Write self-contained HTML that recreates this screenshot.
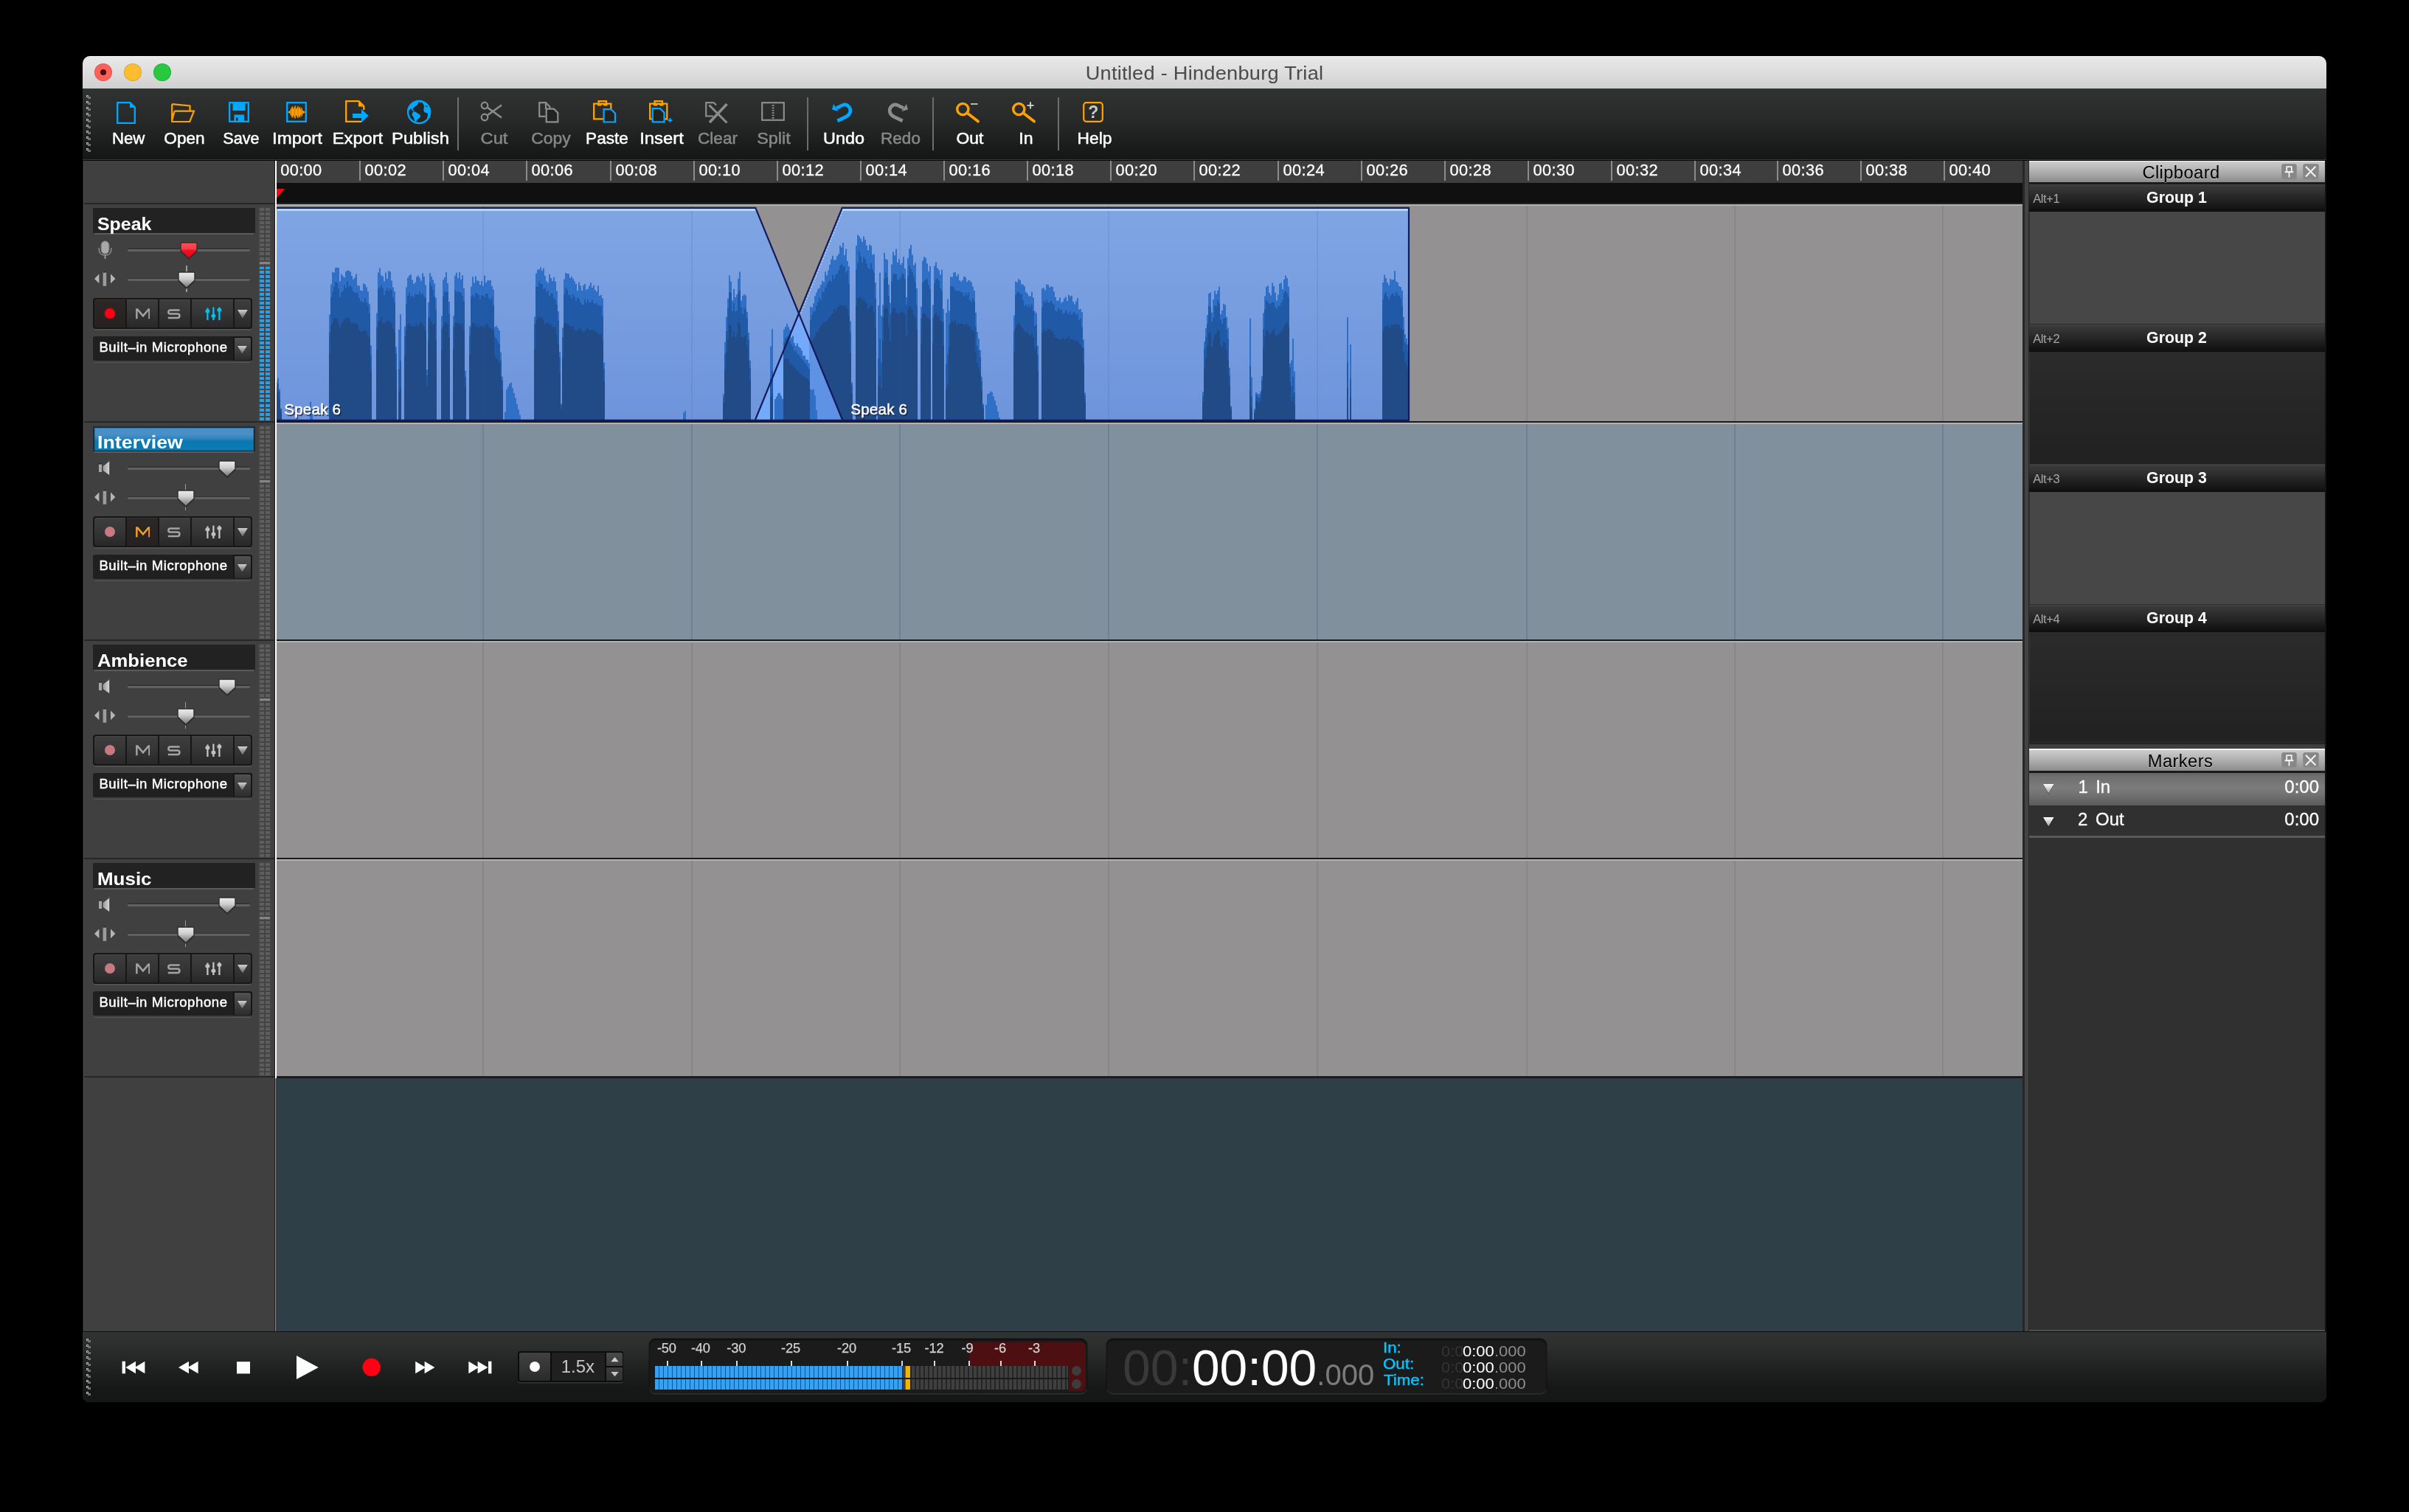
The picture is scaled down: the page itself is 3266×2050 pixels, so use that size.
<!DOCTYPE html>
<html><head><meta charset="utf-8"><title>Untitled - Hindenburg Trial</title>
<style>
html,body{margin:0;padding:0;background:#000;}
body{width:3266px;height:2050px;overflow:hidden;position:relative;font-family:"Liberation Sans",sans-serif;}
.a{position:absolute;display:block;}
.t{position:absolute;white-space:nowrap;font-family:"Liberation Sans",sans-serif;-webkit-text-stroke:0.02px currentColor;}
#win{position:absolute;left:112px;top:76px;width:3042px;height:1825px;overflow:hidden;border-radius:10px 10px 9px 9px;background:#3f3f3f;}
#in{position:absolute;left:-112px;top:-76px;width:3266px;height:2050px;opacity:0.9999;transform:rotate(0.0001deg);}
</style></head>
<body>
<div id="win"><div id="in">
<div class="a" style="left:112px;top:218px;width:261px;height:1587px;background:#3f3f3f;"></div>
<div class="a" style="left:112px;top:218px;width:1.4px;height:1587px;background:#151515;"></div>
<div class="a" style="left:113.4px;top:218px;width:1px;height:1587px;background:#4a4a4a;"></div>
<div class="a" style="left:114px;top:275px;width:258.5px;height:2px;background:#262626;"></div>
<div class="a" style="left:114px;top:571px;width:258.5px;height:2px;background:#262626;"></div>
<div class="a" style="left:114px;top:867px;width:258.5px;height:2px;background:#262626;"></div>
<div class="a" style="left:114px;top:1163px;width:258.5px;height:2px;background:#262626;"></div>
<div class="a" style="left:114px;top:1459px;width:258.5px;height:2px;background:#262626;"></div>
<div class="a" style="left:126px;top:282px;width:220px;height:34px;background:#212121;"></div>
<div class="a" style="left:128px;top:316.4px;width:216px;height:1.4px;background:#5a5a5a;"></div>
<div class="t" style="left:131.60px;top:291.53px;font-size:24.3px;line-height:24.3px;color:#fff;font-weight:700;transform:scaleX(1.025);transform-origin:0 0;">Speak</div>
<svg class="a" style="left:133.3px;top:325.5px;" width="19" height="26" viewBox="0 0 19 26"><rect x="4" y="0.8" width="11" height="17.5" rx="5.5" fill="#a9a9a9" stroke="#6c6c6c" stroke-width="1"/><path d="M1.2 10V12.5C1.2 17.5 5 20 9.5 20C14 20 17.8 17.5 17.8 12.5V10" fill="none" stroke="#8c8c8c" stroke-width="1.5"/><path d="M9.5 20V25" stroke="#9c9c9c" stroke-width="1.8"/></svg>
<div class="a" style="left:173px;top:336.4px;width:166px;height:1.6px;background:#333;border-radius:2px 2px 0 0;"></div><div class="a" style="left:173px;top:338.0px;width:166px;height:2.6px;background:#5f5f5f;border-radius:0 0 2px 2px;"></div>
<svg class="a" style="left:242.6px;top:326.8px;" width="26" height="28" viewBox="0 0 26 28"><defs><linearGradient id="tgk0a" x1="0" y1="0" x2="0" y2="1"><stop offset="0" stop-color="#f85058"/><stop offset="0.42" stop-color="#f63a44"/><stop offset="0.46" stop-color="#f01222"/><stop offset="1" stop-color="#e00010"/></linearGradient></defs><path d="M2 3.2Q2 2 3.2 2H22.8Q24 2 24 3.2V13L13 23.5L2 13Z" fill="rgba(0,0,0,.35)" transform="translate(0,1.6)"/><path d="M2 3.2Q2 2 3.2 2H22.8Q24 2 24 3.2V13L13 23.5L2 13Z" fill="url(#tgk0a)" stroke="#3a2a2a" stroke-width="1.4"/></svg>
<svg class="a" style="left:127.8px;top:368px;" width="28.4" height="19.8" viewBox="0 0 28.4 19.8"><path d="M6.4 3.5V16.3L0 9.9Z" fill="#b4b4b4"/><path d="M22 3.5V16.3L28.4 9.9Z" fill="#b4b4b4"/><rect x="11.6" y="0" width="4.6" height="19.8" fill="#9c9c9c"/><rect x="11.6" y="0" width="4.6" height="1.6" fill="#2a2a2a"/></svg>
<div class="a" style="left:173px;top:376.6px;width:166px;height:1.6px;background:#333;border-radius:2px 2px 0 0;"></div><div class="a" style="left:173px;top:378.20000000000005px;width:166px;height:2.6px;background:#5f5f5f;border-radius:0 0 2px 2px;"></div>
<div class="a" style="left:252.39999999999998px;top:360px;width:1.8px;height:9px;background:#9a9a9a;"></div>
<div class="a" style="left:252.39999999999998px;top:388px;width:1.8px;height:8px;background:#9a9a9a;"></div>
<svg class="a" style="left:240.2px;top:366.6px;" width="26" height="28" viewBox="0 0 26 28"><defs><linearGradient id="tgk0b" x1="0" y1="0" x2="0" y2="1"><stop offset="0" stop-color="#ececec"/><stop offset="0.4" stop-color="#cfcfcf"/><stop offset="1" stop-color="#6e6e6e"/></linearGradient></defs><path d="M2 3.2Q2 2 3.2 2H22.8Q24 2 24 3.2V13L13 23.5L2 13Z" fill="rgba(0,0,0,.35)" transform="translate(0,1.6)"/><path d="M2 3.2Q2 2 3.2 2H22.8Q24 2 24 3.2V13L13 23.5L2 13Z" fill="url(#tgk0b)" stroke="#2c2c2c" stroke-width="1.4"/></svg>
<div class="a" style="left:126.4px;top:404px;width:215.2px;height:41.5px;background:#161616;border-radius:4px;"></div>
<div class="a" style="left:128px;top:446.4px;width:212px;height:1.3px;background:#505050;"></div>
<div class="a" style="left:127.8px;top:405.8px;width:42.4px;height:38.2px;background:linear-gradient(#2a2626 0%,#252121 100%);border-radius:3px 0 0 3px;box-shadow:inset 0 1px 0 rgba(255,255,255,.06);"></div>
<div class="a" style="left:172px;top:405.8px;width:42px;height:38.2px;background:linear-gradient(#3d3d3d 0%,#343434 50%,#272727 100%);box-shadow:inset 0 1px 0 rgba(255,255,255,.06);"></div>
<div class="a" style="left:215.9px;top:405.8px;width:42.1px;height:38.2px;background:linear-gradient(#3d3d3d 0%,#343434 50%,#272727 100%);box-shadow:inset 0 1px 0 rgba(255,255,255,.06);"></div>
<div class="a" style="left:259.7px;top:405.8px;width:56.3px;height:38.2px;background:linear-gradient(#3d3d3d 0%,#343434 50%,#272727 100%);box-shadow:inset 0 1px 0 rgba(255,255,255,.06);"></div>
<div class="a" style="left:317.8px;top:405.8px;width:22.7px;height:38.2px;background:linear-gradient(#3d3d3d 0%,#343434 50%,#272727 100%);border-radius:0 3px 3px 0;box-shadow:inset 0 1px 0 rgba(255,255,255,.06);"></div>
<div class="a" style="left:141.7px;top:417.8px;width:14.6px;height:14.6px;background:#ff0012;border-radius:50%;box-shadow:0 0 6px rgba(255,0,0,.25);"></div>
<svg class="a" style="left:183.5px;top:418.3px;" width="19.8" height="14.6" viewBox="0 0 22 15.5"><path d="M1.5 15.5V1.4H2.6L11 11.2L19.4 1.4H20.5V15.5" fill="none" stroke="#a4a4a4" stroke-width="2.7" stroke-linejoin="miter"/></svg>
<svg class="a" style="left:227px;top:418px;" width="18" height="15.5" viewBox="0 0 18 15.5"><path d="M16.6 2.6H4Q1.4 2.6 1.4 4.9V5.3Q1.4 7.6 4 7.6H13.6Q16.4 7.6 16.4 10V10.6Q16.4 13 13.6 13H0.8" fill="none" stroke="#a4a4a4" stroke-width="2.5"/></svg>
<svg class="a" style="left:277.6px;top:415.7px;" width="23" height="18.5" viewBox="0 0 23 18.5"><rect x="2.25" y="1.5" width="2.3" height="16.5" fill="#00c0f2"/><rect x="0.5" y="3.6" width="5.8" height="4.4" rx="1.5" fill="#00c0f2"/><rect x="10.25" y="0.6" width="2.3" height="17.4" fill="#00c0f2"/><rect x="8.5" y="10" width="5.8" height="4.4" rx="1.5" fill="#00c0f2"/><rect x="18.25" y="0.6" width="2.3" height="17.4" fill="#00c0f2"/><rect x="16.5" y="2" width="5.8" height="4.4" rx="1.5" fill="#00c0f2"/></svg>
<svg class="a" style="left:322.2px;top:419.7px;" width="13.8" height="11.7" viewBox="0 0 13.8 11.7"><defs><linearGradient id="ark0c" x1="0" y1="0" x2="0" y2="1"><stop offset="0" stop-color="#d2d2d2"/><stop offset="1" stop-color="#5c5c5c"/></linearGradient></defs><path d="M0 0H13.8 L6.9 11.7Z" fill="url(#ark0c)"/></svg>
<div class="a" style="left:126.4px;top:456.3px;width:215.2px;height:33.2px;background:#1f1f1f;border-radius:3px;"></div>
<div class="a" style="left:316.2px;top:456.3px;width:25.4px;height:33.2px;background:#151515;border-radius:0 3px 3px 0;"></div>
<div class="a" style="left:317.8px;top:458.0px;width:22.7px;height:30.2px;background:linear-gradient(#505050 0%,#3e3e3e 50%,#2c2c2c 100%);border-radius:0 2px 2px 0;"></div>
<div class="a" style="left:128px;top:490.5px;width:212px;height:1.3px;background:#575757;"></div>
<div class="t" style="left:134.40px;top:462.24px;font-size:18.5px;line-height:18.5px;color:#fff;font-weight:400;letter-spacing:0.62px;-webkit-text-stroke:0.5px #fff;">Built–in Microphone</div>
<svg class="a" style="left:322.4px;top:468.6px;" width="12.8" height="10.6" viewBox="0 0 12.8 10.6"><defs><linearGradient id="ark0d" x1="0" y1="0" x2="0" y2="1"><stop offset="0" stop-color="#d2d2d2"/><stop offset="1" stop-color="#5c5c5c"/></linearGradient></defs><path d="M0 0H12.8 L6.4 10.6Z" fill="url(#ark0d)"/></svg>
<div class="a" style="left:350.4px;top:280px;width:17.6px;height:291px;background:#434343;"></div>
<div class="a" style="left:352px;top:282px;width:6.1px;height:4px;background:#5c5c5c;"></div><div class="a" style="left:360px;top:282px;width:6.1px;height:4px;background:#5c5c5c;"></div>
<div class="a" style="left:352px;top:288px;width:6.1px;height:4px;background:#5c5c5c;"></div><div class="a" style="left:360px;top:288px;width:6.1px;height:4px;background:#5c5c5c;"></div>
<div class="a" style="left:352px;top:294px;width:6.1px;height:4px;background:#5c5c5c;"></div><div class="a" style="left:360px;top:294px;width:6.1px;height:4px;background:#5c5c5c;"></div>
<div class="a" style="left:352px;top:300px;width:6.1px;height:4px;background:#5c5c5c;"></div><div class="a" style="left:360px;top:300px;width:6.1px;height:4px;background:#5c5c5c;"></div>
<div class="a" style="left:352px;top:306px;width:6.1px;height:4px;background:#5c5c5c;"></div><div class="a" style="left:360px;top:306px;width:6.1px;height:4px;background:#5c5c5c;"></div>
<div class="a" style="left:352px;top:312px;width:6.1px;height:4px;background:#5c5c5c;"></div><div class="a" style="left:360px;top:312px;width:6.1px;height:4px;background:#5c5c5c;"></div>
<div class="a" style="left:352px;top:318px;width:6.1px;height:4px;background:#5c5c5c;"></div><div class="a" style="left:360px;top:318px;width:6.1px;height:4px;background:#5c5c5c;"></div>
<div class="a" style="left:352px;top:324px;width:6.1px;height:4px;background:#5c5c5c;"></div><div class="a" style="left:360px;top:324px;width:6.1px;height:4px;background:#5c5c5c;"></div>
<div class="a" style="left:352px;top:330px;width:6.1px;height:4px;background:#5c5c5c;"></div><div class="a" style="left:360px;top:330px;width:6.1px;height:4px;background:#5c5c5c;"></div>
<div class="a" style="left:352px;top:336px;width:6.1px;height:4px;background:#5c5c5c;"></div><div class="a" style="left:360px;top:336px;width:6.1px;height:4px;background:#5c5c5c;"></div>
<div class="a" style="left:352px;top:342px;width:6.1px;height:4px;background:#5c5c5c;"></div><div class="a" style="left:360px;top:342px;width:6.1px;height:4px;background:#5c5c5c;"></div>
<div class="a" style="left:352px;top:349px;width:6.1px;height:4px;background:#5c5c5c;"></div><div class="a" style="left:360px;top:349px;width:6.1px;height:4px;background:#5c5c5c;"></div>
<div class="a" style="left:352px;top:355px;width:6.1px;height:4px;background:#5c5c5c;"></div><div class="a" style="left:360px;top:355px;width:6.1px;height:4px;background:#5c5c5c;"></div>
<div class="a" style="left:352px;top:361px;width:6.1px;height:4px;background:#5c5c5c;"></div><div class="a" style="left:360px;top:361px;width:6.1px;height:4px;background:#5c5c5c;"></div>
<div class="a" style="left:352px;top:362.00px;width:6.1px;height:3.00px;background:#2e9ce6;"></div><div class="a" style="left:360px;top:362.00px;width:6.1px;height:3.00px;background:#2e9ce6;"></div>
<div class="a" style="left:352px;top:367px;width:6.1px;height:4px;background:#2e9ce6;"></div><div class="a" style="left:360px;top:367px;width:6.1px;height:4px;background:#2e9ce6;"></div>
<div class="a" style="left:352px;top:373px;width:6.1px;height:4px;background:#2e9ce6;"></div><div class="a" style="left:360px;top:373px;width:6.1px;height:4px;background:#2e9ce6;"></div>
<div class="a" style="left:352px;top:379px;width:6.1px;height:4px;background:#2e9ce6;"></div><div class="a" style="left:360px;top:379px;width:6.1px;height:4px;background:#2e9ce6;"></div>
<div class="a" style="left:352px;top:385px;width:6.1px;height:4px;background:#2e9ce6;"></div><div class="a" style="left:360px;top:385px;width:6.1px;height:4px;background:#2e9ce6;"></div>
<div class="a" style="left:352px;top:391px;width:6.1px;height:4px;background:#2e9ce6;"></div><div class="a" style="left:360px;top:391px;width:6.1px;height:4px;background:#2e9ce6;"></div>
<div class="a" style="left:352px;top:397px;width:6.1px;height:4px;background:#2e9ce6;"></div><div class="a" style="left:360px;top:397px;width:6.1px;height:4px;background:#2e9ce6;"></div>
<div class="a" style="left:352px;top:403px;width:6.1px;height:4px;background:#2e9ce6;"></div><div class="a" style="left:360px;top:403px;width:6.1px;height:4px;background:#2e9ce6;"></div>
<div class="a" style="left:352px;top:409px;width:6.1px;height:4px;background:#2e9ce6;"></div><div class="a" style="left:360px;top:409px;width:6.1px;height:4px;background:#2e9ce6;"></div>
<div class="a" style="left:352px;top:415px;width:6.1px;height:4px;background:#2e9ce6;"></div><div class="a" style="left:360px;top:415px;width:6.1px;height:4px;background:#2e9ce6;"></div>
<div class="a" style="left:352px;top:421px;width:6.1px;height:4px;background:#2e9ce6;"></div><div class="a" style="left:360px;top:421px;width:6.1px;height:4px;background:#2e9ce6;"></div>
<div class="a" style="left:352px;top:427px;width:6.1px;height:4px;background:#2e9ce6;"></div><div class="a" style="left:360px;top:427px;width:6.1px;height:4px;background:#2e9ce6;"></div>
<div class="a" style="left:352px;top:433px;width:6.1px;height:4px;background:#2e9ce6;"></div><div class="a" style="left:360px;top:433px;width:6.1px;height:4px;background:#2e9ce6;"></div>
<div class="a" style="left:352px;top:439px;width:6.1px;height:4px;background:#2e9ce6;"></div><div class="a" style="left:360px;top:439px;width:6.1px;height:4px;background:#2e9ce6;"></div>
<div class="a" style="left:352px;top:445px;width:6.1px;height:4px;background:#2e9ce6;"></div><div class="a" style="left:360px;top:445px;width:6.1px;height:4px;background:#2e9ce6;"></div>
<div class="a" style="left:352px;top:451px;width:6.1px;height:4px;background:#2e9ce6;"></div><div class="a" style="left:360px;top:451px;width:6.1px;height:4px;background:#2e9ce6;"></div>
<div class="a" style="left:352px;top:457px;width:6.1px;height:4px;background:#2e9ce6;"></div><div class="a" style="left:360px;top:457px;width:6.1px;height:4px;background:#2e9ce6;"></div>
<div class="a" style="left:352px;top:463px;width:6.1px;height:4px;background:#2e9ce6;"></div><div class="a" style="left:360px;top:463px;width:6.1px;height:4px;background:#2e9ce6;"></div>
<div class="a" style="left:352px;top:469px;width:6.1px;height:4px;background:#2e9ce6;"></div><div class="a" style="left:360px;top:469px;width:6.1px;height:4px;background:#2e9ce6;"></div>
<div class="a" style="left:352px;top:475px;width:6.1px;height:4px;background:#2e9ce6;"></div><div class="a" style="left:360px;top:475px;width:6.1px;height:4px;background:#2e9ce6;"></div>
<div class="a" style="left:352px;top:481px;width:6.1px;height:4px;background:#2e9ce6;"></div><div class="a" style="left:360px;top:481px;width:6.1px;height:4px;background:#2e9ce6;"></div>
<div class="a" style="left:352px;top:487px;width:6.1px;height:4px;background:#2e9ce6;"></div><div class="a" style="left:360px;top:487px;width:6.1px;height:4px;background:#2e9ce6;"></div>
<div class="a" style="left:352px;top:493px;width:6.1px;height:4px;background:#2e9ce6;"></div><div class="a" style="left:360px;top:493px;width:6.1px;height:4px;background:#2e9ce6;"></div>
<div class="a" style="left:352px;top:499px;width:6.1px;height:4px;background:#2e9ce6;"></div><div class="a" style="left:360px;top:499px;width:6.1px;height:4px;background:#2e9ce6;"></div>
<div class="a" style="left:352px;top:505px;width:6.1px;height:4px;background:#2e9ce6;"></div><div class="a" style="left:360px;top:505px;width:6.1px;height:4px;background:#2e9ce6;"></div>
<div class="a" style="left:352px;top:511px;width:6.1px;height:4px;background:#2e9ce6;"></div><div class="a" style="left:360px;top:511px;width:6.1px;height:4px;background:#2e9ce6;"></div>
<div class="a" style="left:352px;top:517px;width:6.1px;height:4px;background:#2e9ce6;"></div><div class="a" style="left:360px;top:517px;width:6.1px;height:4px;background:#2e9ce6;"></div>
<div class="a" style="left:352px;top:523px;width:6.1px;height:4px;background:#2e9ce6;"></div><div class="a" style="left:360px;top:523px;width:6.1px;height:4px;background:#2e9ce6;"></div>
<div class="a" style="left:352px;top:529px;width:6.1px;height:4px;background:#2e9ce6;"></div><div class="a" style="left:360px;top:529px;width:6.1px;height:4px;background:#2e9ce6;"></div>
<div class="a" style="left:352px;top:535px;width:6.1px;height:4px;background:#2e9ce6;"></div><div class="a" style="left:360px;top:535px;width:6.1px;height:4px;background:#2e9ce6;"></div>
<div class="a" style="left:352px;top:541px;width:6.1px;height:4px;background:#2e9ce6;"></div><div class="a" style="left:360px;top:541px;width:6.1px;height:4px;background:#2e9ce6;"></div>
<div class="a" style="left:352px;top:548px;width:6.1px;height:4px;background:#2e9ce6;"></div><div class="a" style="left:360px;top:548px;width:6.1px;height:4px;background:#2e9ce6;"></div>
<div class="a" style="left:352px;top:554px;width:6.1px;height:4px;background:#2e9ce6;"></div><div class="a" style="left:360px;top:554px;width:6.1px;height:4px;background:#2e9ce6;"></div>
<div class="a" style="left:352px;top:560px;width:6.1px;height:4px;background:#2e9ce6;"></div><div class="a" style="left:360px;top:560px;width:6.1px;height:4px;background:#2e9ce6;"></div>
<div class="a" style="left:352px;top:566px;width:6.1px;height:4px;background:#2e9ce6;"></div><div class="a" style="left:360px;top:566px;width:6.1px;height:4px;background:#2e9ce6;"></div>
<div class="a" style="left:352px;top:355.2px;width:14.1px;height:2.6px;background:#858585;"></div>
<div class="a" style="left:126px;top:578px;width:220px;height:34px;background:#1d2a33;"></div>
<div class="a" style="left:127.6px;top:579.6px;width:216.8px;height:31px;background:linear-gradient(#4a8ec6 0%,#4690c8 30%,#2f82bd 48%,#0a78b0 58%,#087ab4 100%);box-shadow:inset 0 0 0 1px rgba(20,60,100,.35);"></div>
<div class="a" style="left:128px;top:612.4px;width:216px;height:1.4px;background:#5a5a5a;"></div>
<div class="t" style="left:131.60px;top:587.53px;font-size:24.3px;line-height:24.3px;color:#fff;font-weight:700;transform:scaleX(1.1);transform-origin:0 0;">Interview</div>
<svg class="a" style="left:133.8px;top:624px;" width="15" height="21" viewBox="0 0 15 21"><defs><linearGradient id="spk1" x1="0" y1="0" x2="1" y2="0"><stop offset="0" stop-color="#9a9a9a"/><stop offset="1" stop-color="#d6d6d6"/></linearGradient></defs><rect x="0" y="5" width="4" height="11" fill="#a8a8a8"/><rect x="0" y="4" width="4" height="1.6" fill="#2a2a2a"/><path d="M5.6 6.5L14.2 0V20L5.6 14Z" fill="url(#spk1)"/><path d="M5.6 6.5L14.2 0V1.6L5.6 8Z" fill="#2e2e2e"/></svg>
<div class="a" style="left:173px;top:632.4px;width:166px;height:1.6px;background:#333;border-radius:2px 2px 0 0;"></div><div class="a" style="left:173px;top:634.0px;width:166px;height:2.6px;background:#5f5f5f;border-radius:0 0 2px 2px;"></div>
<svg class="a" style="left:295px;top:622.8px;" width="26" height="28" viewBox="0 0 26 28"><defs><linearGradient id="tgk1a" x1="0" y1="0" x2="0" y2="1"><stop offset="0" stop-color="#ececec"/><stop offset="0.4" stop-color="#cfcfcf"/><stop offset="1" stop-color="#6e6e6e"/></linearGradient></defs><path d="M2 3.2Q2 2 3.2 2H22.8Q24 2 24 3.2V13L13 23.5L2 13Z" fill="rgba(0,0,0,.35)" transform="translate(0,1.6)"/><path d="M2 3.2Q2 2 3.2 2H22.8Q24 2 24 3.2V13L13 23.5L2 13Z" fill="url(#tgk1a)" stroke="#2c2c2c" stroke-width="1.4"/></svg>
<svg class="a" style="left:127.8px;top:664px;" width="28.4" height="19.8" viewBox="0 0 28.4 19.8"><path d="M6.4 3.5V16.3L0 9.9Z" fill="#b4b4b4"/><path d="M22 3.5V16.3L28.4 9.9Z" fill="#b4b4b4"/><rect x="11.6" y="0" width="4.6" height="19.8" fill="#9c9c9c"/><rect x="11.6" y="0" width="4.6" height="1.6" fill="#2a2a2a"/></svg>
<div class="a" style="left:173px;top:672.6px;width:166px;height:1.6px;background:#333;border-radius:2px 2px 0 0;"></div><div class="a" style="left:173px;top:674.2px;width:166px;height:2.6px;background:#5f5f5f;border-radius:0 0 2px 2px;"></div>
<div class="a" style="left:250.7px;top:656px;width:1.8px;height:9px;background:#9a9a9a;"></div>
<div class="a" style="left:250.7px;top:684px;width:1.8px;height:8px;background:#9a9a9a;"></div>
<svg class="a" style="left:238.5px;top:662.6px;" width="26" height="28" viewBox="0 0 26 28"><defs><linearGradient id="tgk1b" x1="0" y1="0" x2="0" y2="1"><stop offset="0" stop-color="#ececec"/><stop offset="0.4" stop-color="#cfcfcf"/><stop offset="1" stop-color="#6e6e6e"/></linearGradient></defs><path d="M2 3.2Q2 2 3.2 2H22.8Q24 2 24 3.2V13L13 23.5L2 13Z" fill="rgba(0,0,0,.35)" transform="translate(0,1.6)"/><path d="M2 3.2Q2 2 3.2 2H22.8Q24 2 24 3.2V13L13 23.5L2 13Z" fill="url(#tgk1b)" stroke="#2c2c2c" stroke-width="1.4"/></svg>
<div class="a" style="left:126.4px;top:700px;width:215.2px;height:41.5px;background:#161616;border-radius:4px;"></div>
<div class="a" style="left:128px;top:742.4px;width:212px;height:1.3px;background:#505050;"></div>
<div class="a" style="left:127.8px;top:701.8px;width:42.4px;height:38.2px;background:linear-gradient(#3d3d3d 0%,#343434 50%,#272727 100%);border-radius:3px 0 0 3px;box-shadow:inset 0 1px 0 rgba(255,255,255,.06);"></div>
<div class="a" style="left:172px;top:701.8px;width:42px;height:38.2px;background:linear-gradient(#2a2626 0%,#252121 100%);box-shadow:inset 0 1px 0 rgba(255,255,255,.06);"></div>
<div class="a" style="left:215.9px;top:701.8px;width:42.1px;height:38.2px;background:linear-gradient(#3d3d3d 0%,#343434 50%,#272727 100%);box-shadow:inset 0 1px 0 rgba(255,255,255,.06);"></div>
<div class="a" style="left:259.7px;top:701.8px;width:56.3px;height:38.2px;background:linear-gradient(#3d3d3d 0%,#343434 50%,#272727 100%);box-shadow:inset 0 1px 0 rgba(255,255,255,.06);"></div>
<div class="a" style="left:317.8px;top:701.8px;width:22.7px;height:38.2px;background:linear-gradient(#3d3d3d 0%,#343434 50%,#272727 100%);border-radius:0 3px 3px 0;box-shadow:inset 0 1px 0 rgba(255,255,255,.06);"></div>
<div class="a" style="left:141.7px;top:713.8px;width:14.6px;height:14.6px;background:#c67880;border-radius:50%;"></div>
<svg class="a" style="left:183.5px;top:714.3px;" width="19.8" height="14.6" viewBox="0 0 22 15.5"><path d="M1.5 15.5V1.4H2.6L11 11.2L19.4 1.4H20.5V15.5" fill="none" stroke="#f4a21c" stroke-width="2.7" stroke-linejoin="miter"/></svg>
<svg class="a" style="left:227px;top:714px;" width="18" height="15.5" viewBox="0 0 18 15.5"><path d="M16.6 2.6H4Q1.4 2.6 1.4 4.9V5.3Q1.4 7.6 4 7.6H13.6Q16.4 7.6 16.4 10V10.6Q16.4 13 13.6 13H0.8" fill="none" stroke="#a4a4a4" stroke-width="2.5"/></svg>
<svg class="a" style="left:277.6px;top:711.7px;" width="23" height="18.5" viewBox="0 0 23 18.5"><rect x="2.25" y="1.5" width="2.3" height="16.5" fill="#c2c2c2"/><rect x="0.5" y="3.6" width="5.8" height="4.4" rx="1.5" fill="#c2c2c2"/><rect x="10.25" y="0.6" width="2.3" height="17.4" fill="#c2c2c2"/><rect x="8.5" y="10" width="5.8" height="4.4" rx="1.5" fill="#c2c2c2"/><rect x="18.25" y="0.6" width="2.3" height="17.4" fill="#c2c2c2"/><rect x="16.5" y="2" width="5.8" height="4.4" rx="1.5" fill="#c2c2c2"/></svg>
<svg class="a" style="left:322.2px;top:715.7px;" width="13.8" height="11.7" viewBox="0 0 13.8 11.7"><defs><linearGradient id="ark1c" x1="0" y1="0" x2="0" y2="1"><stop offset="0" stop-color="#d2d2d2"/><stop offset="1" stop-color="#5c5c5c"/></linearGradient></defs><path d="M0 0H13.8 L6.9 11.7Z" fill="url(#ark1c)"/></svg>
<div class="a" style="left:126.4px;top:752.3px;width:215.2px;height:33.2px;background:#1f1f1f;border-radius:3px;"></div>
<div class="a" style="left:316.2px;top:752.3px;width:25.4px;height:33.2px;background:#151515;border-radius:0 3px 3px 0;"></div>
<div class="a" style="left:317.8px;top:754.0px;width:22.7px;height:30.2px;background:linear-gradient(#505050 0%,#3e3e3e 50%,#2c2c2c 100%);border-radius:0 2px 2px 0;"></div>
<div class="a" style="left:128px;top:786.5px;width:212px;height:1.3px;background:#575757;"></div>
<div class="t" style="left:134.40px;top:758.24px;font-size:18.5px;line-height:18.5px;color:#fff;font-weight:400;letter-spacing:0.62px;-webkit-text-stroke:0.5px #fff;">Built–in Microphone</div>
<svg class="a" style="left:322.4px;top:764.6px;" width="12.8" height="10.6" viewBox="0 0 12.8 10.6"><defs><linearGradient id="ark1d" x1="0" y1="0" x2="0" y2="1"><stop offset="0" stop-color="#d2d2d2"/><stop offset="1" stop-color="#5c5c5c"/></linearGradient></defs><path d="M0 0H12.8 L6.4 10.6Z" fill="url(#ark1d)"/></svg>
<div class="a" style="left:350.4px;top:576px;width:17.6px;height:291px;background:#434343;"></div>
<div class="a" style="left:352px;top:578px;width:6.1px;height:4px;background:#5c5c5c;"></div><div class="a" style="left:360px;top:578px;width:6.1px;height:4px;background:#5c5c5c;"></div>
<div class="a" style="left:352px;top:584px;width:6.1px;height:4px;background:#5c5c5c;"></div><div class="a" style="left:360px;top:584px;width:6.1px;height:4px;background:#5c5c5c;"></div>
<div class="a" style="left:352px;top:590px;width:6.1px;height:4px;background:#5c5c5c;"></div><div class="a" style="left:360px;top:590px;width:6.1px;height:4px;background:#5c5c5c;"></div>
<div class="a" style="left:352px;top:596px;width:6.1px;height:4px;background:#5c5c5c;"></div><div class="a" style="left:360px;top:596px;width:6.1px;height:4px;background:#5c5c5c;"></div>
<div class="a" style="left:352px;top:602px;width:6.1px;height:4px;background:#5c5c5c;"></div><div class="a" style="left:360px;top:602px;width:6.1px;height:4px;background:#5c5c5c;"></div>
<div class="a" style="left:352px;top:608px;width:6.1px;height:4px;background:#5c5c5c;"></div><div class="a" style="left:360px;top:608px;width:6.1px;height:4px;background:#5c5c5c;"></div>
<div class="a" style="left:352px;top:614px;width:6.1px;height:4px;background:#5c5c5c;"></div><div class="a" style="left:360px;top:614px;width:6.1px;height:4px;background:#5c5c5c;"></div>
<div class="a" style="left:352px;top:620px;width:6.1px;height:4px;background:#5c5c5c;"></div><div class="a" style="left:360px;top:620px;width:6.1px;height:4px;background:#5c5c5c;"></div>
<div class="a" style="left:352px;top:626px;width:6.1px;height:4px;background:#5c5c5c;"></div><div class="a" style="left:360px;top:626px;width:6.1px;height:4px;background:#5c5c5c;"></div>
<div class="a" style="left:352px;top:632px;width:6.1px;height:4px;background:#5c5c5c;"></div><div class="a" style="left:360px;top:632px;width:6.1px;height:4px;background:#5c5c5c;"></div>
<div class="a" style="left:352px;top:638px;width:6.1px;height:4px;background:#5c5c5c;"></div><div class="a" style="left:360px;top:638px;width:6.1px;height:4px;background:#5c5c5c;"></div>
<div class="a" style="left:352px;top:645px;width:6.1px;height:4px;background:#5c5c5c;"></div><div class="a" style="left:360px;top:645px;width:6.1px;height:4px;background:#5c5c5c;"></div>
<div class="a" style="left:352px;top:651px;width:6.1px;height:4px;background:#5c5c5c;"></div><div class="a" style="left:360px;top:651px;width:6.1px;height:4px;background:#5c5c5c;"></div>
<div class="a" style="left:352px;top:657px;width:6.1px;height:4px;background:#5c5c5c;"></div><div class="a" style="left:360px;top:657px;width:6.1px;height:4px;background:#5c5c5c;"></div>
<div class="a" style="left:352px;top:663px;width:6.1px;height:4px;background:#5c5c5c;"></div><div class="a" style="left:360px;top:663px;width:6.1px;height:4px;background:#5c5c5c;"></div>
<div class="a" style="left:352px;top:669px;width:6.1px;height:4px;background:#5c5c5c;"></div><div class="a" style="left:360px;top:669px;width:6.1px;height:4px;background:#5c5c5c;"></div>
<div class="a" style="left:352px;top:675px;width:6.1px;height:4px;background:#5c5c5c;"></div><div class="a" style="left:360px;top:675px;width:6.1px;height:4px;background:#5c5c5c;"></div>
<div class="a" style="left:352px;top:681px;width:6.1px;height:4px;background:#5c5c5c;"></div><div class="a" style="left:360px;top:681px;width:6.1px;height:4px;background:#5c5c5c;"></div>
<div class="a" style="left:352px;top:687px;width:6.1px;height:4px;background:#5c5c5c;"></div><div class="a" style="left:360px;top:687px;width:6.1px;height:4px;background:#5c5c5c;"></div>
<div class="a" style="left:352px;top:693px;width:6.1px;height:4px;background:#5c5c5c;"></div><div class="a" style="left:360px;top:693px;width:6.1px;height:4px;background:#5c5c5c;"></div>
<div class="a" style="left:352px;top:699px;width:6.1px;height:4px;background:#5c5c5c;"></div><div class="a" style="left:360px;top:699px;width:6.1px;height:4px;background:#5c5c5c;"></div>
<div class="a" style="left:352px;top:705px;width:6.1px;height:4px;background:#5c5c5c;"></div><div class="a" style="left:360px;top:705px;width:6.1px;height:4px;background:#5c5c5c;"></div>
<div class="a" style="left:352px;top:711px;width:6.1px;height:4px;background:#5c5c5c;"></div><div class="a" style="left:360px;top:711px;width:6.1px;height:4px;background:#5c5c5c;"></div>
<div class="a" style="left:352px;top:717px;width:6.1px;height:4px;background:#5c5c5c;"></div><div class="a" style="left:360px;top:717px;width:6.1px;height:4px;background:#5c5c5c;"></div>
<div class="a" style="left:352px;top:723px;width:6.1px;height:4px;background:#5c5c5c;"></div><div class="a" style="left:360px;top:723px;width:6.1px;height:4px;background:#5c5c5c;"></div>
<div class="a" style="left:352px;top:729px;width:6.1px;height:4px;background:#5c5c5c;"></div><div class="a" style="left:360px;top:729px;width:6.1px;height:4px;background:#5c5c5c;"></div>
<div class="a" style="left:352px;top:735px;width:6.1px;height:4px;background:#5c5c5c;"></div><div class="a" style="left:360px;top:735px;width:6.1px;height:4px;background:#5c5c5c;"></div>
<div class="a" style="left:352px;top:741px;width:6.1px;height:4px;background:#5c5c5c;"></div><div class="a" style="left:360px;top:741px;width:6.1px;height:4px;background:#5c5c5c;"></div>
<div class="a" style="left:352px;top:747px;width:6.1px;height:4px;background:#5c5c5c;"></div><div class="a" style="left:360px;top:747px;width:6.1px;height:4px;background:#5c5c5c;"></div>
<div class="a" style="left:352px;top:753px;width:6.1px;height:4px;background:#5c5c5c;"></div><div class="a" style="left:360px;top:753px;width:6.1px;height:4px;background:#5c5c5c;"></div>
<div class="a" style="left:352px;top:759px;width:6.1px;height:4px;background:#5c5c5c;"></div><div class="a" style="left:360px;top:759px;width:6.1px;height:4px;background:#5c5c5c;"></div>
<div class="a" style="left:352px;top:765px;width:6.1px;height:4px;background:#5c5c5c;"></div><div class="a" style="left:360px;top:765px;width:6.1px;height:4px;background:#5c5c5c;"></div>
<div class="a" style="left:352px;top:771px;width:6.1px;height:4px;background:#5c5c5c;"></div><div class="a" style="left:360px;top:771px;width:6.1px;height:4px;background:#5c5c5c;"></div>
<div class="a" style="left:352px;top:777px;width:6.1px;height:4px;background:#5c5c5c;"></div><div class="a" style="left:360px;top:777px;width:6.1px;height:4px;background:#5c5c5c;"></div>
<div class="a" style="left:352px;top:783px;width:6.1px;height:4px;background:#5c5c5c;"></div><div class="a" style="left:360px;top:783px;width:6.1px;height:4px;background:#5c5c5c;"></div>
<div class="a" style="left:352px;top:789px;width:6.1px;height:4px;background:#5c5c5c;"></div><div class="a" style="left:360px;top:789px;width:6.1px;height:4px;background:#5c5c5c;"></div>
<div class="a" style="left:352px;top:795px;width:6.1px;height:4px;background:#5c5c5c;"></div><div class="a" style="left:360px;top:795px;width:6.1px;height:4px;background:#5c5c5c;"></div>
<div class="a" style="left:352px;top:801px;width:6.1px;height:4px;background:#5c5c5c;"></div><div class="a" style="left:360px;top:801px;width:6.1px;height:4px;background:#5c5c5c;"></div>
<div class="a" style="left:352px;top:807px;width:6.1px;height:4px;background:#5c5c5c;"></div><div class="a" style="left:360px;top:807px;width:6.1px;height:4px;background:#5c5c5c;"></div>
<div class="a" style="left:352px;top:813px;width:6.1px;height:4px;background:#5c5c5c;"></div><div class="a" style="left:360px;top:813px;width:6.1px;height:4px;background:#5c5c5c;"></div>
<div class="a" style="left:352px;top:819px;width:6.1px;height:4px;background:#5c5c5c;"></div><div class="a" style="left:360px;top:819px;width:6.1px;height:4px;background:#5c5c5c;"></div>
<div class="a" style="left:352px;top:825px;width:6.1px;height:4px;background:#5c5c5c;"></div><div class="a" style="left:360px;top:825px;width:6.1px;height:4px;background:#5c5c5c;"></div>
<div class="a" style="left:352px;top:831px;width:6.1px;height:4px;background:#5c5c5c;"></div><div class="a" style="left:360px;top:831px;width:6.1px;height:4px;background:#5c5c5c;"></div>
<div class="a" style="left:352px;top:837px;width:6.1px;height:4px;background:#5c5c5c;"></div><div class="a" style="left:360px;top:837px;width:6.1px;height:4px;background:#5c5c5c;"></div>
<div class="a" style="left:352px;top:844px;width:6.1px;height:4px;background:#5c5c5c;"></div><div class="a" style="left:360px;top:844px;width:6.1px;height:4px;background:#5c5c5c;"></div>
<div class="a" style="left:352px;top:850px;width:6.1px;height:4px;background:#5c5c5c;"></div><div class="a" style="left:360px;top:850px;width:6.1px;height:4px;background:#5c5c5c;"></div>
<div class="a" style="left:352px;top:856px;width:6.1px;height:4px;background:#5c5c5c;"></div><div class="a" style="left:360px;top:856px;width:6.1px;height:4px;background:#5c5c5c;"></div>
<div class="a" style="left:352px;top:862px;width:6.1px;height:4px;background:#5c5c5c;"></div><div class="a" style="left:360px;top:862px;width:6.1px;height:4px;background:#5c5c5c;"></div>
<div class="a" style="left:352px;top:651.2px;width:14.1px;height:2.6px;background:#858585;"></div>
<div class="a" style="left:126px;top:874px;width:220px;height:34px;background:#212121;"></div>
<div class="a" style="left:128px;top:908.4px;width:216px;height:1.4px;background:#5a5a5a;"></div>
<div class="t" style="left:131.60px;top:883.53px;font-size:24.3px;line-height:24.3px;color:#fff;font-weight:700;transform:scaleX(1.056);transform-origin:0 0;">Ambience</div>
<svg class="a" style="left:133.8px;top:920px;" width="15" height="21" viewBox="0 0 15 21"><defs><linearGradient id="spk2" x1="0" y1="0" x2="1" y2="0"><stop offset="0" stop-color="#9a9a9a"/><stop offset="1" stop-color="#d6d6d6"/></linearGradient></defs><rect x="0" y="5" width="4" height="11" fill="#a8a8a8"/><rect x="0" y="4" width="4" height="1.6" fill="#2a2a2a"/><path d="M5.6 6.5L14.2 0V20L5.6 14Z" fill="url(#spk2)"/><path d="M5.6 6.5L14.2 0V1.6L5.6 8Z" fill="#2e2e2e"/></svg>
<div class="a" style="left:173px;top:928.4px;width:166px;height:1.6px;background:#333;border-radius:2px 2px 0 0;"></div><div class="a" style="left:173px;top:930.0px;width:166px;height:2.6px;background:#5f5f5f;border-radius:0 0 2px 2px;"></div>
<svg class="a" style="left:295px;top:918.8px;" width="26" height="28" viewBox="0 0 26 28"><defs><linearGradient id="tgk2a" x1="0" y1="0" x2="0" y2="1"><stop offset="0" stop-color="#ececec"/><stop offset="0.4" stop-color="#cfcfcf"/><stop offset="1" stop-color="#6e6e6e"/></linearGradient></defs><path d="M2 3.2Q2 2 3.2 2H22.8Q24 2 24 3.2V13L13 23.5L2 13Z" fill="rgba(0,0,0,.35)" transform="translate(0,1.6)"/><path d="M2 3.2Q2 2 3.2 2H22.8Q24 2 24 3.2V13L13 23.5L2 13Z" fill="url(#tgk2a)" stroke="#2c2c2c" stroke-width="1.4"/></svg>
<svg class="a" style="left:127.8px;top:960px;" width="28.4" height="19.8" viewBox="0 0 28.4 19.8"><path d="M6.4 3.5V16.3L0 9.9Z" fill="#b4b4b4"/><path d="M22 3.5V16.3L28.4 9.9Z" fill="#b4b4b4"/><rect x="11.6" y="0" width="4.6" height="19.8" fill="#9c9c9c"/><rect x="11.6" y="0" width="4.6" height="1.6" fill="#2a2a2a"/></svg>
<div class="a" style="left:173px;top:968.6px;width:166px;height:1.6px;background:#333;border-radius:2px 2px 0 0;"></div><div class="a" style="left:173px;top:970.2px;width:166px;height:2.6px;background:#5f5f5f;border-radius:0 0 2px 2px;"></div>
<div class="a" style="left:250.7px;top:952px;width:1.8px;height:9px;background:#9a9a9a;"></div>
<div class="a" style="left:250.7px;top:980px;width:1.8px;height:8px;background:#9a9a9a;"></div>
<svg class="a" style="left:238.5px;top:958.6px;" width="26" height="28" viewBox="0 0 26 28"><defs><linearGradient id="tgk2b" x1="0" y1="0" x2="0" y2="1"><stop offset="0" stop-color="#ececec"/><stop offset="0.4" stop-color="#cfcfcf"/><stop offset="1" stop-color="#6e6e6e"/></linearGradient></defs><path d="M2 3.2Q2 2 3.2 2H22.8Q24 2 24 3.2V13L13 23.5L2 13Z" fill="rgba(0,0,0,.35)" transform="translate(0,1.6)"/><path d="M2 3.2Q2 2 3.2 2H22.8Q24 2 24 3.2V13L13 23.5L2 13Z" fill="url(#tgk2b)" stroke="#2c2c2c" stroke-width="1.4"/></svg>
<div class="a" style="left:126.4px;top:996px;width:215.2px;height:41.5px;background:#161616;border-radius:4px;"></div>
<div class="a" style="left:128px;top:1038.4px;width:212px;height:1.3px;background:#505050;"></div>
<div class="a" style="left:127.8px;top:997.8px;width:42.4px;height:38.2px;background:linear-gradient(#3d3d3d 0%,#343434 50%,#272727 100%);border-radius:3px 0 0 3px;box-shadow:inset 0 1px 0 rgba(255,255,255,.06);"></div>
<div class="a" style="left:172px;top:997.8px;width:42px;height:38.2px;background:linear-gradient(#3d3d3d 0%,#343434 50%,#272727 100%);box-shadow:inset 0 1px 0 rgba(255,255,255,.06);"></div>
<div class="a" style="left:215.9px;top:997.8px;width:42.1px;height:38.2px;background:linear-gradient(#3d3d3d 0%,#343434 50%,#272727 100%);box-shadow:inset 0 1px 0 rgba(255,255,255,.06);"></div>
<div class="a" style="left:259.7px;top:997.8px;width:56.3px;height:38.2px;background:linear-gradient(#3d3d3d 0%,#343434 50%,#272727 100%);box-shadow:inset 0 1px 0 rgba(255,255,255,.06);"></div>
<div class="a" style="left:317.8px;top:997.8px;width:22.7px;height:38.2px;background:linear-gradient(#3d3d3d 0%,#343434 50%,#272727 100%);border-radius:0 3px 3px 0;box-shadow:inset 0 1px 0 rgba(255,255,255,.06);"></div>
<div class="a" style="left:141.7px;top:1009.8px;width:14.6px;height:14.6px;background:#c67880;border-radius:50%;"></div>
<svg class="a" style="left:183.5px;top:1010.3px;" width="19.8" height="14.6" viewBox="0 0 22 15.5"><path d="M1.5 15.5V1.4H2.6L11 11.2L19.4 1.4H20.5V15.5" fill="none" stroke="#a4a4a4" stroke-width="2.7" stroke-linejoin="miter"/></svg>
<svg class="a" style="left:227px;top:1010px;" width="18" height="15.5" viewBox="0 0 18 15.5"><path d="M16.6 2.6H4Q1.4 2.6 1.4 4.9V5.3Q1.4 7.6 4 7.6H13.6Q16.4 7.6 16.4 10V10.6Q16.4 13 13.6 13H0.8" fill="none" stroke="#a4a4a4" stroke-width="2.5"/></svg>
<svg class="a" style="left:277.6px;top:1007.7px;" width="23" height="18.5" viewBox="0 0 23 18.5"><rect x="2.25" y="1.5" width="2.3" height="16.5" fill="#c2c2c2"/><rect x="0.5" y="3.6" width="5.8" height="4.4" rx="1.5" fill="#c2c2c2"/><rect x="10.25" y="0.6" width="2.3" height="17.4" fill="#c2c2c2"/><rect x="8.5" y="10" width="5.8" height="4.4" rx="1.5" fill="#c2c2c2"/><rect x="18.25" y="0.6" width="2.3" height="17.4" fill="#c2c2c2"/><rect x="16.5" y="2" width="5.8" height="4.4" rx="1.5" fill="#c2c2c2"/></svg>
<svg class="a" style="left:322.2px;top:1011.7px;" width="13.8" height="11.7" viewBox="0 0 13.8 11.7"><defs><linearGradient id="ark2c" x1="0" y1="0" x2="0" y2="1"><stop offset="0" stop-color="#d2d2d2"/><stop offset="1" stop-color="#5c5c5c"/></linearGradient></defs><path d="M0 0H13.8 L6.9 11.7Z" fill="url(#ark2c)"/></svg>
<div class="a" style="left:126.4px;top:1048.3px;width:215.2px;height:33.2px;background:#1f1f1f;border-radius:3px;"></div>
<div class="a" style="left:316.2px;top:1048.3px;width:25.4px;height:33.2px;background:#151515;border-radius:0 3px 3px 0;"></div>
<div class="a" style="left:317.8px;top:1050.0px;width:22.7px;height:30.2px;background:linear-gradient(#505050 0%,#3e3e3e 50%,#2c2c2c 100%);border-radius:0 2px 2px 0;"></div>
<div class="a" style="left:128px;top:1082.5px;width:212px;height:1.3px;background:#575757;"></div>
<div class="t" style="left:134.40px;top:1054.24px;font-size:18.5px;line-height:18.5px;color:#fff;font-weight:400;letter-spacing:0.62px;-webkit-text-stroke:0.5px #fff;">Built–in Microphone</div>
<svg class="a" style="left:322.4px;top:1060.6px;" width="12.8" height="10.6" viewBox="0 0 12.8 10.6"><defs><linearGradient id="ark2d" x1="0" y1="0" x2="0" y2="1"><stop offset="0" stop-color="#d2d2d2"/><stop offset="1" stop-color="#5c5c5c"/></linearGradient></defs><path d="M0 0H12.8 L6.4 10.6Z" fill="url(#ark2d)"/></svg>
<div class="a" style="left:350.4px;top:872px;width:17.6px;height:291px;background:#434343;"></div>
<div class="a" style="left:352px;top:874px;width:6.1px;height:4px;background:#5c5c5c;"></div><div class="a" style="left:360px;top:874px;width:6.1px;height:4px;background:#5c5c5c;"></div>
<div class="a" style="left:352px;top:880px;width:6.1px;height:4px;background:#5c5c5c;"></div><div class="a" style="left:360px;top:880px;width:6.1px;height:4px;background:#5c5c5c;"></div>
<div class="a" style="left:352px;top:886px;width:6.1px;height:4px;background:#5c5c5c;"></div><div class="a" style="left:360px;top:886px;width:6.1px;height:4px;background:#5c5c5c;"></div>
<div class="a" style="left:352px;top:892px;width:6.1px;height:4px;background:#5c5c5c;"></div><div class="a" style="left:360px;top:892px;width:6.1px;height:4px;background:#5c5c5c;"></div>
<div class="a" style="left:352px;top:898px;width:6.1px;height:4px;background:#5c5c5c;"></div><div class="a" style="left:360px;top:898px;width:6.1px;height:4px;background:#5c5c5c;"></div>
<div class="a" style="left:352px;top:904px;width:6.1px;height:4px;background:#5c5c5c;"></div><div class="a" style="left:360px;top:904px;width:6.1px;height:4px;background:#5c5c5c;"></div>
<div class="a" style="left:352px;top:910px;width:6.1px;height:4px;background:#5c5c5c;"></div><div class="a" style="left:360px;top:910px;width:6.1px;height:4px;background:#5c5c5c;"></div>
<div class="a" style="left:352px;top:916px;width:6.1px;height:4px;background:#5c5c5c;"></div><div class="a" style="left:360px;top:916px;width:6.1px;height:4px;background:#5c5c5c;"></div>
<div class="a" style="left:352px;top:922px;width:6.1px;height:4px;background:#5c5c5c;"></div><div class="a" style="left:360px;top:922px;width:6.1px;height:4px;background:#5c5c5c;"></div>
<div class="a" style="left:352px;top:928px;width:6.1px;height:4px;background:#5c5c5c;"></div><div class="a" style="left:360px;top:928px;width:6.1px;height:4px;background:#5c5c5c;"></div>
<div class="a" style="left:352px;top:934px;width:6.1px;height:4px;background:#5c5c5c;"></div><div class="a" style="left:360px;top:934px;width:6.1px;height:4px;background:#5c5c5c;"></div>
<div class="a" style="left:352px;top:941px;width:6.1px;height:4px;background:#5c5c5c;"></div><div class="a" style="left:360px;top:941px;width:6.1px;height:4px;background:#5c5c5c;"></div>
<div class="a" style="left:352px;top:947px;width:6.1px;height:4px;background:#5c5c5c;"></div><div class="a" style="left:360px;top:947px;width:6.1px;height:4px;background:#5c5c5c;"></div>
<div class="a" style="left:352px;top:953px;width:6.1px;height:4px;background:#5c5c5c;"></div><div class="a" style="left:360px;top:953px;width:6.1px;height:4px;background:#5c5c5c;"></div>
<div class="a" style="left:352px;top:959px;width:6.1px;height:4px;background:#5c5c5c;"></div><div class="a" style="left:360px;top:959px;width:6.1px;height:4px;background:#5c5c5c;"></div>
<div class="a" style="left:352px;top:965px;width:6.1px;height:4px;background:#5c5c5c;"></div><div class="a" style="left:360px;top:965px;width:6.1px;height:4px;background:#5c5c5c;"></div>
<div class="a" style="left:352px;top:971px;width:6.1px;height:4px;background:#5c5c5c;"></div><div class="a" style="left:360px;top:971px;width:6.1px;height:4px;background:#5c5c5c;"></div>
<div class="a" style="left:352px;top:977px;width:6.1px;height:4px;background:#5c5c5c;"></div><div class="a" style="left:360px;top:977px;width:6.1px;height:4px;background:#5c5c5c;"></div>
<div class="a" style="left:352px;top:983px;width:6.1px;height:4px;background:#5c5c5c;"></div><div class="a" style="left:360px;top:983px;width:6.1px;height:4px;background:#5c5c5c;"></div>
<div class="a" style="left:352px;top:989px;width:6.1px;height:4px;background:#5c5c5c;"></div><div class="a" style="left:360px;top:989px;width:6.1px;height:4px;background:#5c5c5c;"></div>
<div class="a" style="left:352px;top:995px;width:6.1px;height:4px;background:#5c5c5c;"></div><div class="a" style="left:360px;top:995px;width:6.1px;height:4px;background:#5c5c5c;"></div>
<div class="a" style="left:352px;top:1001px;width:6.1px;height:4px;background:#5c5c5c;"></div><div class="a" style="left:360px;top:1001px;width:6.1px;height:4px;background:#5c5c5c;"></div>
<div class="a" style="left:352px;top:1007px;width:6.1px;height:4px;background:#5c5c5c;"></div><div class="a" style="left:360px;top:1007px;width:6.1px;height:4px;background:#5c5c5c;"></div>
<div class="a" style="left:352px;top:1013px;width:6.1px;height:4px;background:#5c5c5c;"></div><div class="a" style="left:360px;top:1013px;width:6.1px;height:4px;background:#5c5c5c;"></div>
<div class="a" style="left:352px;top:1019px;width:6.1px;height:4px;background:#5c5c5c;"></div><div class="a" style="left:360px;top:1019px;width:6.1px;height:4px;background:#5c5c5c;"></div>
<div class="a" style="left:352px;top:1025px;width:6.1px;height:4px;background:#5c5c5c;"></div><div class="a" style="left:360px;top:1025px;width:6.1px;height:4px;background:#5c5c5c;"></div>
<div class="a" style="left:352px;top:1031px;width:6.1px;height:4px;background:#5c5c5c;"></div><div class="a" style="left:360px;top:1031px;width:6.1px;height:4px;background:#5c5c5c;"></div>
<div class="a" style="left:352px;top:1037px;width:6.1px;height:4px;background:#5c5c5c;"></div><div class="a" style="left:360px;top:1037px;width:6.1px;height:4px;background:#5c5c5c;"></div>
<div class="a" style="left:352px;top:1043px;width:6.1px;height:4px;background:#5c5c5c;"></div><div class="a" style="left:360px;top:1043px;width:6.1px;height:4px;background:#5c5c5c;"></div>
<div class="a" style="left:352px;top:1049px;width:6.1px;height:4px;background:#5c5c5c;"></div><div class="a" style="left:360px;top:1049px;width:6.1px;height:4px;background:#5c5c5c;"></div>
<div class="a" style="left:352px;top:1055px;width:6.1px;height:4px;background:#5c5c5c;"></div><div class="a" style="left:360px;top:1055px;width:6.1px;height:4px;background:#5c5c5c;"></div>
<div class="a" style="left:352px;top:1061px;width:6.1px;height:4px;background:#5c5c5c;"></div><div class="a" style="left:360px;top:1061px;width:6.1px;height:4px;background:#5c5c5c;"></div>
<div class="a" style="left:352px;top:1067px;width:6.1px;height:4px;background:#5c5c5c;"></div><div class="a" style="left:360px;top:1067px;width:6.1px;height:4px;background:#5c5c5c;"></div>
<div class="a" style="left:352px;top:1073px;width:6.1px;height:4px;background:#5c5c5c;"></div><div class="a" style="left:360px;top:1073px;width:6.1px;height:4px;background:#5c5c5c;"></div>
<div class="a" style="left:352px;top:1079px;width:6.1px;height:4px;background:#5c5c5c;"></div><div class="a" style="left:360px;top:1079px;width:6.1px;height:4px;background:#5c5c5c;"></div>
<div class="a" style="left:352px;top:1085px;width:6.1px;height:4px;background:#5c5c5c;"></div><div class="a" style="left:360px;top:1085px;width:6.1px;height:4px;background:#5c5c5c;"></div>
<div class="a" style="left:352px;top:1091px;width:6.1px;height:4px;background:#5c5c5c;"></div><div class="a" style="left:360px;top:1091px;width:6.1px;height:4px;background:#5c5c5c;"></div>
<div class="a" style="left:352px;top:1097px;width:6.1px;height:4px;background:#5c5c5c;"></div><div class="a" style="left:360px;top:1097px;width:6.1px;height:4px;background:#5c5c5c;"></div>
<div class="a" style="left:352px;top:1103px;width:6.1px;height:4px;background:#5c5c5c;"></div><div class="a" style="left:360px;top:1103px;width:6.1px;height:4px;background:#5c5c5c;"></div>
<div class="a" style="left:352px;top:1109px;width:6.1px;height:4px;background:#5c5c5c;"></div><div class="a" style="left:360px;top:1109px;width:6.1px;height:4px;background:#5c5c5c;"></div>
<div class="a" style="left:352px;top:1115px;width:6.1px;height:4px;background:#5c5c5c;"></div><div class="a" style="left:360px;top:1115px;width:6.1px;height:4px;background:#5c5c5c;"></div>
<div class="a" style="left:352px;top:1121px;width:6.1px;height:4px;background:#5c5c5c;"></div><div class="a" style="left:360px;top:1121px;width:6.1px;height:4px;background:#5c5c5c;"></div>
<div class="a" style="left:352px;top:1127px;width:6.1px;height:4px;background:#5c5c5c;"></div><div class="a" style="left:360px;top:1127px;width:6.1px;height:4px;background:#5c5c5c;"></div>
<div class="a" style="left:352px;top:1133px;width:6.1px;height:4px;background:#5c5c5c;"></div><div class="a" style="left:360px;top:1133px;width:6.1px;height:4px;background:#5c5c5c;"></div>
<div class="a" style="left:352px;top:1140px;width:6.1px;height:4px;background:#5c5c5c;"></div><div class="a" style="left:360px;top:1140px;width:6.1px;height:4px;background:#5c5c5c;"></div>
<div class="a" style="left:352px;top:1146px;width:6.1px;height:4px;background:#5c5c5c;"></div><div class="a" style="left:360px;top:1146px;width:6.1px;height:4px;background:#5c5c5c;"></div>
<div class="a" style="left:352px;top:1152px;width:6.1px;height:4px;background:#5c5c5c;"></div><div class="a" style="left:360px;top:1152px;width:6.1px;height:4px;background:#5c5c5c;"></div>
<div class="a" style="left:352px;top:1158px;width:6.1px;height:4px;background:#5c5c5c;"></div><div class="a" style="left:360px;top:1158px;width:6.1px;height:4px;background:#5c5c5c;"></div>
<div class="a" style="left:352px;top:947.2px;width:14.1px;height:2.6px;background:#858585;"></div>
<div class="a" style="left:126px;top:1170px;width:220px;height:34px;background:#212121;"></div>
<div class="a" style="left:128px;top:1204.4px;width:216px;height:1.4px;background:#5a5a5a;"></div>
<div class="t" style="left:131.60px;top:1179.53px;font-size:24.3px;line-height:24.3px;color:#fff;font-weight:700;transform:scaleX(1.068);transform-origin:0 0;">Music</div>
<svg class="a" style="left:133.8px;top:1216px;" width="15" height="21" viewBox="0 0 15 21"><defs><linearGradient id="spk3" x1="0" y1="0" x2="1" y2="0"><stop offset="0" stop-color="#9a9a9a"/><stop offset="1" stop-color="#d6d6d6"/></linearGradient></defs><rect x="0" y="5" width="4" height="11" fill="#a8a8a8"/><rect x="0" y="4" width="4" height="1.6" fill="#2a2a2a"/><path d="M5.6 6.5L14.2 0V20L5.6 14Z" fill="url(#spk3)"/><path d="M5.6 6.5L14.2 0V1.6L5.6 8Z" fill="#2e2e2e"/></svg>
<div class="a" style="left:173px;top:1224.4px;width:166px;height:1.6px;background:#333;border-radius:2px 2px 0 0;"></div><div class="a" style="left:173px;top:1226.0px;width:166px;height:2.6px;background:#5f5f5f;border-radius:0 0 2px 2px;"></div>
<svg class="a" style="left:295px;top:1214.8px;" width="26" height="28" viewBox="0 0 26 28"><defs><linearGradient id="tgk3a" x1="0" y1="0" x2="0" y2="1"><stop offset="0" stop-color="#ececec"/><stop offset="0.4" stop-color="#cfcfcf"/><stop offset="1" stop-color="#6e6e6e"/></linearGradient></defs><path d="M2 3.2Q2 2 3.2 2H22.8Q24 2 24 3.2V13L13 23.5L2 13Z" fill="rgba(0,0,0,.35)" transform="translate(0,1.6)"/><path d="M2 3.2Q2 2 3.2 2H22.8Q24 2 24 3.2V13L13 23.5L2 13Z" fill="url(#tgk3a)" stroke="#2c2c2c" stroke-width="1.4"/></svg>
<svg class="a" style="left:127.8px;top:1256px;" width="28.4" height="19.8" viewBox="0 0 28.4 19.8"><path d="M6.4 3.5V16.3L0 9.9Z" fill="#b4b4b4"/><path d="M22 3.5V16.3L28.4 9.9Z" fill="#b4b4b4"/><rect x="11.6" y="0" width="4.6" height="19.8" fill="#9c9c9c"/><rect x="11.6" y="0" width="4.6" height="1.6" fill="#2a2a2a"/></svg>
<div class="a" style="left:173px;top:1264.6px;width:166px;height:1.6px;background:#333;border-radius:2px 2px 0 0;"></div><div class="a" style="left:173px;top:1266.1999999999998px;width:166px;height:2.6px;background:#5f5f5f;border-radius:0 0 2px 2px;"></div>
<div class="a" style="left:250.7px;top:1248px;width:1.8px;height:9px;background:#9a9a9a;"></div>
<div class="a" style="left:250.7px;top:1276px;width:1.8px;height:8px;background:#9a9a9a;"></div>
<svg class="a" style="left:238.5px;top:1254.6px;" width="26" height="28" viewBox="0 0 26 28"><defs><linearGradient id="tgk3b" x1="0" y1="0" x2="0" y2="1"><stop offset="0" stop-color="#ececec"/><stop offset="0.4" stop-color="#cfcfcf"/><stop offset="1" stop-color="#6e6e6e"/></linearGradient></defs><path d="M2 3.2Q2 2 3.2 2H22.8Q24 2 24 3.2V13L13 23.5L2 13Z" fill="rgba(0,0,0,.35)" transform="translate(0,1.6)"/><path d="M2 3.2Q2 2 3.2 2H22.8Q24 2 24 3.2V13L13 23.5L2 13Z" fill="url(#tgk3b)" stroke="#2c2c2c" stroke-width="1.4"/></svg>
<div class="a" style="left:126.4px;top:1292px;width:215.2px;height:41.5px;background:#161616;border-radius:4px;"></div>
<div class="a" style="left:128px;top:1334.4px;width:212px;height:1.3px;background:#505050;"></div>
<div class="a" style="left:127.8px;top:1293.8px;width:42.4px;height:38.2px;background:linear-gradient(#3d3d3d 0%,#343434 50%,#272727 100%);border-radius:3px 0 0 3px;box-shadow:inset 0 1px 0 rgba(255,255,255,.06);"></div>
<div class="a" style="left:172px;top:1293.8px;width:42px;height:38.2px;background:linear-gradient(#3d3d3d 0%,#343434 50%,#272727 100%);box-shadow:inset 0 1px 0 rgba(255,255,255,.06);"></div>
<div class="a" style="left:215.9px;top:1293.8px;width:42.1px;height:38.2px;background:linear-gradient(#3d3d3d 0%,#343434 50%,#272727 100%);box-shadow:inset 0 1px 0 rgba(255,255,255,.06);"></div>
<div class="a" style="left:259.7px;top:1293.8px;width:56.3px;height:38.2px;background:linear-gradient(#3d3d3d 0%,#343434 50%,#272727 100%);box-shadow:inset 0 1px 0 rgba(255,255,255,.06);"></div>
<div class="a" style="left:317.8px;top:1293.8px;width:22.7px;height:38.2px;background:linear-gradient(#3d3d3d 0%,#343434 50%,#272727 100%);border-radius:0 3px 3px 0;box-shadow:inset 0 1px 0 rgba(255,255,255,.06);"></div>
<div class="a" style="left:141.7px;top:1305.8px;width:14.6px;height:14.6px;background:#c67880;border-radius:50%;"></div>
<svg class="a" style="left:183.5px;top:1306.3px;" width="19.8" height="14.6" viewBox="0 0 22 15.5"><path d="M1.5 15.5V1.4H2.6L11 11.2L19.4 1.4H20.5V15.5" fill="none" stroke="#a4a4a4" stroke-width="2.7" stroke-linejoin="miter"/></svg>
<svg class="a" style="left:227px;top:1306px;" width="18" height="15.5" viewBox="0 0 18 15.5"><path d="M16.6 2.6H4Q1.4 2.6 1.4 4.9V5.3Q1.4 7.6 4 7.6H13.6Q16.4 7.6 16.4 10V10.6Q16.4 13 13.6 13H0.8" fill="none" stroke="#a4a4a4" stroke-width="2.5"/></svg>
<svg class="a" style="left:277.6px;top:1303.7px;" width="23" height="18.5" viewBox="0 0 23 18.5"><rect x="2.25" y="1.5" width="2.3" height="16.5" fill="#c2c2c2"/><rect x="0.5" y="3.6" width="5.8" height="4.4" rx="1.5" fill="#c2c2c2"/><rect x="10.25" y="0.6" width="2.3" height="17.4" fill="#c2c2c2"/><rect x="8.5" y="10" width="5.8" height="4.4" rx="1.5" fill="#c2c2c2"/><rect x="18.25" y="0.6" width="2.3" height="17.4" fill="#c2c2c2"/><rect x="16.5" y="2" width="5.8" height="4.4" rx="1.5" fill="#c2c2c2"/></svg>
<svg class="a" style="left:322.2px;top:1307.7px;" width="13.8" height="11.7" viewBox="0 0 13.8 11.7"><defs><linearGradient id="ark3c" x1="0" y1="0" x2="0" y2="1"><stop offset="0" stop-color="#d2d2d2"/><stop offset="1" stop-color="#5c5c5c"/></linearGradient></defs><path d="M0 0H13.8 L6.9 11.7Z" fill="url(#ark3c)"/></svg>
<div class="a" style="left:126.4px;top:1344.3px;width:215.2px;height:33.2px;background:#1f1f1f;border-radius:3px;"></div>
<div class="a" style="left:316.2px;top:1344.3px;width:25.4px;height:33.2px;background:#151515;border-radius:0 3px 3px 0;"></div>
<div class="a" style="left:317.8px;top:1346.0px;width:22.7px;height:30.2px;background:linear-gradient(#505050 0%,#3e3e3e 50%,#2c2c2c 100%);border-radius:0 2px 2px 0;"></div>
<div class="a" style="left:128px;top:1378.5px;width:212px;height:1.3px;background:#575757;"></div>
<div class="t" style="left:134.40px;top:1350.24px;font-size:18.5px;line-height:18.5px;color:#fff;font-weight:400;letter-spacing:0.62px;-webkit-text-stroke:0.5px #fff;">Built–in Microphone</div>
<svg class="a" style="left:322.4px;top:1356.6px;" width="12.8" height="10.6" viewBox="0 0 12.8 10.6"><defs><linearGradient id="ark3d" x1="0" y1="0" x2="0" y2="1"><stop offset="0" stop-color="#d2d2d2"/><stop offset="1" stop-color="#5c5c5c"/></linearGradient></defs><path d="M0 0H12.8 L6.4 10.6Z" fill="url(#ark3d)"/></svg>
<div class="a" style="left:350.4px;top:1168px;width:17.6px;height:291px;background:#434343;"></div>
<div class="a" style="left:352px;top:1170px;width:6.1px;height:4px;background:#5c5c5c;"></div><div class="a" style="left:360px;top:1170px;width:6.1px;height:4px;background:#5c5c5c;"></div>
<div class="a" style="left:352px;top:1176px;width:6.1px;height:4px;background:#5c5c5c;"></div><div class="a" style="left:360px;top:1176px;width:6.1px;height:4px;background:#5c5c5c;"></div>
<div class="a" style="left:352px;top:1182px;width:6.1px;height:4px;background:#5c5c5c;"></div><div class="a" style="left:360px;top:1182px;width:6.1px;height:4px;background:#5c5c5c;"></div>
<div class="a" style="left:352px;top:1188px;width:6.1px;height:4px;background:#5c5c5c;"></div><div class="a" style="left:360px;top:1188px;width:6.1px;height:4px;background:#5c5c5c;"></div>
<div class="a" style="left:352px;top:1194px;width:6.1px;height:4px;background:#5c5c5c;"></div><div class="a" style="left:360px;top:1194px;width:6.1px;height:4px;background:#5c5c5c;"></div>
<div class="a" style="left:352px;top:1200px;width:6.1px;height:4px;background:#5c5c5c;"></div><div class="a" style="left:360px;top:1200px;width:6.1px;height:4px;background:#5c5c5c;"></div>
<div class="a" style="left:352px;top:1206px;width:6.1px;height:4px;background:#5c5c5c;"></div><div class="a" style="left:360px;top:1206px;width:6.1px;height:4px;background:#5c5c5c;"></div>
<div class="a" style="left:352px;top:1212px;width:6.1px;height:4px;background:#5c5c5c;"></div><div class="a" style="left:360px;top:1212px;width:6.1px;height:4px;background:#5c5c5c;"></div>
<div class="a" style="left:352px;top:1218px;width:6.1px;height:4px;background:#5c5c5c;"></div><div class="a" style="left:360px;top:1218px;width:6.1px;height:4px;background:#5c5c5c;"></div>
<div class="a" style="left:352px;top:1224px;width:6.1px;height:4px;background:#5c5c5c;"></div><div class="a" style="left:360px;top:1224px;width:6.1px;height:4px;background:#5c5c5c;"></div>
<div class="a" style="left:352px;top:1230px;width:6.1px;height:4px;background:#5c5c5c;"></div><div class="a" style="left:360px;top:1230px;width:6.1px;height:4px;background:#5c5c5c;"></div>
<div class="a" style="left:352px;top:1237px;width:6.1px;height:4px;background:#5c5c5c;"></div><div class="a" style="left:360px;top:1237px;width:6.1px;height:4px;background:#5c5c5c;"></div>
<div class="a" style="left:352px;top:1243px;width:6.1px;height:4px;background:#5c5c5c;"></div><div class="a" style="left:360px;top:1243px;width:6.1px;height:4px;background:#5c5c5c;"></div>
<div class="a" style="left:352px;top:1249px;width:6.1px;height:4px;background:#5c5c5c;"></div><div class="a" style="left:360px;top:1249px;width:6.1px;height:4px;background:#5c5c5c;"></div>
<div class="a" style="left:352px;top:1255px;width:6.1px;height:4px;background:#5c5c5c;"></div><div class="a" style="left:360px;top:1255px;width:6.1px;height:4px;background:#5c5c5c;"></div>
<div class="a" style="left:352px;top:1261px;width:6.1px;height:4px;background:#5c5c5c;"></div><div class="a" style="left:360px;top:1261px;width:6.1px;height:4px;background:#5c5c5c;"></div>
<div class="a" style="left:352px;top:1267px;width:6.1px;height:4px;background:#5c5c5c;"></div><div class="a" style="left:360px;top:1267px;width:6.1px;height:4px;background:#5c5c5c;"></div>
<div class="a" style="left:352px;top:1273px;width:6.1px;height:4px;background:#5c5c5c;"></div><div class="a" style="left:360px;top:1273px;width:6.1px;height:4px;background:#5c5c5c;"></div>
<div class="a" style="left:352px;top:1279px;width:6.1px;height:4px;background:#5c5c5c;"></div><div class="a" style="left:360px;top:1279px;width:6.1px;height:4px;background:#5c5c5c;"></div>
<div class="a" style="left:352px;top:1285px;width:6.1px;height:4px;background:#5c5c5c;"></div><div class="a" style="left:360px;top:1285px;width:6.1px;height:4px;background:#5c5c5c;"></div>
<div class="a" style="left:352px;top:1291px;width:6.1px;height:4px;background:#5c5c5c;"></div><div class="a" style="left:360px;top:1291px;width:6.1px;height:4px;background:#5c5c5c;"></div>
<div class="a" style="left:352px;top:1297px;width:6.1px;height:4px;background:#5c5c5c;"></div><div class="a" style="left:360px;top:1297px;width:6.1px;height:4px;background:#5c5c5c;"></div>
<div class="a" style="left:352px;top:1303px;width:6.1px;height:4px;background:#5c5c5c;"></div><div class="a" style="left:360px;top:1303px;width:6.1px;height:4px;background:#5c5c5c;"></div>
<div class="a" style="left:352px;top:1309px;width:6.1px;height:4px;background:#5c5c5c;"></div><div class="a" style="left:360px;top:1309px;width:6.1px;height:4px;background:#5c5c5c;"></div>
<div class="a" style="left:352px;top:1315px;width:6.1px;height:4px;background:#5c5c5c;"></div><div class="a" style="left:360px;top:1315px;width:6.1px;height:4px;background:#5c5c5c;"></div>
<div class="a" style="left:352px;top:1321px;width:6.1px;height:4px;background:#5c5c5c;"></div><div class="a" style="left:360px;top:1321px;width:6.1px;height:4px;background:#5c5c5c;"></div>
<div class="a" style="left:352px;top:1327px;width:6.1px;height:4px;background:#5c5c5c;"></div><div class="a" style="left:360px;top:1327px;width:6.1px;height:4px;background:#5c5c5c;"></div>
<div class="a" style="left:352px;top:1333px;width:6.1px;height:4px;background:#5c5c5c;"></div><div class="a" style="left:360px;top:1333px;width:6.1px;height:4px;background:#5c5c5c;"></div>
<div class="a" style="left:352px;top:1339px;width:6.1px;height:4px;background:#5c5c5c;"></div><div class="a" style="left:360px;top:1339px;width:6.1px;height:4px;background:#5c5c5c;"></div>
<div class="a" style="left:352px;top:1345px;width:6.1px;height:4px;background:#5c5c5c;"></div><div class="a" style="left:360px;top:1345px;width:6.1px;height:4px;background:#5c5c5c;"></div>
<div class="a" style="left:352px;top:1351px;width:6.1px;height:4px;background:#5c5c5c;"></div><div class="a" style="left:360px;top:1351px;width:6.1px;height:4px;background:#5c5c5c;"></div>
<div class="a" style="left:352px;top:1357px;width:6.1px;height:4px;background:#5c5c5c;"></div><div class="a" style="left:360px;top:1357px;width:6.1px;height:4px;background:#5c5c5c;"></div>
<div class="a" style="left:352px;top:1363px;width:6.1px;height:4px;background:#5c5c5c;"></div><div class="a" style="left:360px;top:1363px;width:6.1px;height:4px;background:#5c5c5c;"></div>
<div class="a" style="left:352px;top:1369px;width:6.1px;height:4px;background:#5c5c5c;"></div><div class="a" style="left:360px;top:1369px;width:6.1px;height:4px;background:#5c5c5c;"></div>
<div class="a" style="left:352px;top:1375px;width:6.1px;height:4px;background:#5c5c5c;"></div><div class="a" style="left:360px;top:1375px;width:6.1px;height:4px;background:#5c5c5c;"></div>
<div class="a" style="left:352px;top:1381px;width:6.1px;height:4px;background:#5c5c5c;"></div><div class="a" style="left:360px;top:1381px;width:6.1px;height:4px;background:#5c5c5c;"></div>
<div class="a" style="left:352px;top:1387px;width:6.1px;height:4px;background:#5c5c5c;"></div><div class="a" style="left:360px;top:1387px;width:6.1px;height:4px;background:#5c5c5c;"></div>
<div class="a" style="left:352px;top:1393px;width:6.1px;height:4px;background:#5c5c5c;"></div><div class="a" style="left:360px;top:1393px;width:6.1px;height:4px;background:#5c5c5c;"></div>
<div class="a" style="left:352px;top:1399px;width:6.1px;height:4px;background:#5c5c5c;"></div><div class="a" style="left:360px;top:1399px;width:6.1px;height:4px;background:#5c5c5c;"></div>
<div class="a" style="left:352px;top:1405px;width:6.1px;height:4px;background:#5c5c5c;"></div><div class="a" style="left:360px;top:1405px;width:6.1px;height:4px;background:#5c5c5c;"></div>
<div class="a" style="left:352px;top:1411px;width:6.1px;height:4px;background:#5c5c5c;"></div><div class="a" style="left:360px;top:1411px;width:6.1px;height:4px;background:#5c5c5c;"></div>
<div class="a" style="left:352px;top:1417px;width:6.1px;height:4px;background:#5c5c5c;"></div><div class="a" style="left:360px;top:1417px;width:6.1px;height:4px;background:#5c5c5c;"></div>
<div class="a" style="left:352px;top:1423px;width:6.1px;height:4px;background:#5c5c5c;"></div><div class="a" style="left:360px;top:1423px;width:6.1px;height:4px;background:#5c5c5c;"></div>
<div class="a" style="left:352px;top:1429px;width:6.1px;height:4px;background:#5c5c5c;"></div><div class="a" style="left:360px;top:1429px;width:6.1px;height:4px;background:#5c5c5c;"></div>
<div class="a" style="left:352px;top:1436px;width:6.1px;height:4px;background:#5c5c5c;"></div><div class="a" style="left:360px;top:1436px;width:6.1px;height:4px;background:#5c5c5c;"></div>
<div class="a" style="left:352px;top:1442px;width:6.1px;height:4px;background:#5c5c5c;"></div><div class="a" style="left:360px;top:1442px;width:6.1px;height:4px;background:#5c5c5c;"></div>
<div class="a" style="left:352px;top:1448px;width:6.1px;height:4px;background:#5c5c5c;"></div><div class="a" style="left:360px;top:1448px;width:6.1px;height:4px;background:#5c5c5c;"></div>
<div class="a" style="left:352px;top:1454px;width:6.1px;height:4px;background:#5c5c5c;"></div><div class="a" style="left:360px;top:1454px;width:6.1px;height:4px;background:#5c5c5c;"></div>
<div class="a" style="left:352px;top:1243.2px;width:14.1px;height:2.6px;background:#858585;"></div>
<div class="a" style="left:372.3px;top:218px;width:1px;height:1243px;background:#1c1c1c;"></div>
<div class="a" style="left:373.3px;top:218px;width:2px;height:1243.7px;background:#ffffff;"></div>
<div class="a" style="left:372.3px;top:1461px;width:0.8px;height:344px;background:#1c1c1c;"></div>
<div class="a" style="left:373px;top:1461.7px;width:1.4px;height:343px;background:#00e000;"></div><div class="a" style="left:375px;top:218px;width:2367.4px;height:30px;background:#3d3d3d;"></div>
<div class="a" style="left:375px;top:248px;width:2367.4px;height:27px;background:#0f0f0f;"></div>
<div class="a" style="left:487px;top:218px;width:2px;height:27px;background:#8b8b8b;"></div>
<div class="a" style="left:600px;top:218px;width:2px;height:27px;background:#8b8b8b;"></div>
<div class="a" style="left:713px;top:218px;width:2px;height:27px;background:#8b8b8b;"></div>
<div class="a" style="left:827px;top:218px;width:2px;height:27px;background:#8b8b8b;"></div>
<div class="a" style="left:940px;top:218px;width:2px;height:27px;background:#8b8b8b;"></div>
<div class="a" style="left:1053px;top:218px;width:2px;height:27px;background:#8b8b8b;"></div>
<div class="a" style="left:1166px;top:218px;width:2px;height:27px;background:#8b8b8b;"></div>
<div class="a" style="left:1279px;top:218px;width:2px;height:27px;background:#8b8b8b;"></div>
<div class="a" style="left:1392px;top:218px;width:2px;height:27px;background:#8b8b8b;"></div>
<div class="a" style="left:1505px;top:218px;width:2px;height:27px;background:#8b8b8b;"></div>
<div class="a" style="left:1618px;top:218px;width:2px;height:27px;background:#8b8b8b;"></div>
<div class="a" style="left:1732px;top:218px;width:2px;height:27px;background:#8b8b8b;"></div>
<div class="a" style="left:1845px;top:218px;width:2px;height:27px;background:#8b8b8b;"></div>
<div class="a" style="left:1958px;top:218px;width:2px;height:27px;background:#8b8b8b;"></div>
<div class="a" style="left:2071px;top:218px;width:2px;height:27px;background:#8b8b8b;"></div>
<div class="a" style="left:2184px;top:218px;width:2px;height:27px;background:#8b8b8b;"></div>
<div class="a" style="left:2297px;top:218px;width:2px;height:27px;background:#8b8b8b;"></div>
<div class="a" style="left:2409px;top:218px;width:2px;height:27px;background:#8b8b8b;"></div>
<div class="a" style="left:2522px;top:218px;width:2px;height:27px;background:#8b8b8b;"></div>
<div class="a" style="left:2635px;top:218px;width:2px;height:27px;background:#8b8b8b;"></div>
<div class="t" style="left:380.20px;top:220.25px;font-size:21.8px;line-height:21.8px;color:#fff;font-weight:400;letter-spacing:0.35px;-webkit-text-stroke:0.3px #fff;">00:00</div>
<div class="t" style="left:494.60px;top:220.25px;font-size:21.8px;line-height:21.8px;color:#fff;font-weight:400;letter-spacing:0.35px;-webkit-text-stroke:0.3px #fff;">00:02</div>
<div class="t" style="left:607.60px;top:220.25px;font-size:21.8px;line-height:21.8px;color:#fff;font-weight:400;letter-spacing:0.35px;-webkit-text-stroke:0.3px #fff;">00:04</div>
<div class="t" style="left:720.60px;top:220.25px;font-size:21.8px;line-height:21.8px;color:#fff;font-weight:400;letter-spacing:0.35px;-webkit-text-stroke:0.3px #fff;">00:06</div>
<div class="t" style="left:834.60px;top:220.25px;font-size:21.8px;line-height:21.8px;color:#fff;font-weight:400;letter-spacing:0.35px;-webkit-text-stroke:0.3px #fff;">00:08</div>
<div class="t" style="left:947.60px;top:220.25px;font-size:21.8px;line-height:21.8px;color:#fff;font-weight:400;letter-spacing:0.35px;-webkit-text-stroke:0.3px #fff;">00:10</div>
<div class="t" style="left:1060.60px;top:220.25px;font-size:21.8px;line-height:21.8px;color:#fff;font-weight:400;letter-spacing:0.35px;-webkit-text-stroke:0.3px #fff;">00:12</div>
<div class="t" style="left:1173.60px;top:220.25px;font-size:21.8px;line-height:21.8px;color:#fff;font-weight:400;letter-spacing:0.35px;-webkit-text-stroke:0.3px #fff;">00:14</div>
<div class="t" style="left:1286.60px;top:220.25px;font-size:21.8px;line-height:21.8px;color:#fff;font-weight:400;letter-spacing:0.35px;-webkit-text-stroke:0.3px #fff;">00:16</div>
<div class="t" style="left:1399.60px;top:220.25px;font-size:21.8px;line-height:21.8px;color:#fff;font-weight:400;letter-spacing:0.35px;-webkit-text-stroke:0.3px #fff;">00:18</div>
<div class="t" style="left:1512.60px;top:220.25px;font-size:21.8px;line-height:21.8px;color:#fff;font-weight:400;letter-spacing:0.35px;-webkit-text-stroke:0.3px #fff;">00:20</div>
<div class="t" style="left:1625.60px;top:220.25px;font-size:21.8px;line-height:21.8px;color:#fff;font-weight:400;letter-spacing:0.35px;-webkit-text-stroke:0.3px #fff;">00:22</div>
<div class="t" style="left:1739.60px;top:220.25px;font-size:21.8px;line-height:21.8px;color:#fff;font-weight:400;letter-spacing:0.35px;-webkit-text-stroke:0.3px #fff;">00:24</div>
<div class="t" style="left:1852.60px;top:220.25px;font-size:21.8px;line-height:21.8px;color:#fff;font-weight:400;letter-spacing:0.35px;-webkit-text-stroke:0.3px #fff;">00:26</div>
<div class="t" style="left:1965.60px;top:220.25px;font-size:21.8px;line-height:21.8px;color:#fff;font-weight:400;letter-spacing:0.35px;-webkit-text-stroke:0.3px #fff;">00:28</div>
<div class="t" style="left:2078.60px;top:220.25px;font-size:21.8px;line-height:21.8px;color:#fff;font-weight:400;letter-spacing:0.35px;-webkit-text-stroke:0.3px #fff;">00:30</div>
<div class="t" style="left:2191.60px;top:220.25px;font-size:21.8px;line-height:21.8px;color:#fff;font-weight:400;letter-spacing:0.35px;-webkit-text-stroke:0.3px #fff;">00:32</div>
<div class="t" style="left:2304.60px;top:220.25px;font-size:21.8px;line-height:21.8px;color:#fff;font-weight:400;letter-spacing:0.35px;-webkit-text-stroke:0.3px #fff;">00:34</div>
<div class="t" style="left:2416.60px;top:220.25px;font-size:21.8px;line-height:21.8px;color:#fff;font-weight:400;letter-spacing:0.35px;-webkit-text-stroke:0.3px #fff;">00:36</div>
<div class="t" style="left:2529.60px;top:220.25px;font-size:21.8px;line-height:21.8px;color:#fff;font-weight:400;letter-spacing:0.35px;-webkit-text-stroke:0.3px #fff;">00:38</div>
<div class="t" style="left:2642.60px;top:220.25px;font-size:21.8px;line-height:21.8px;color:#fff;font-weight:400;letter-spacing:0.35px;-webkit-text-stroke:0.3px #fff;">00:40</div>
<svg class="a" style="left:375px;top:256px;" width="12" height="13" viewBox="0 0 12 13"><path d="M0 0H11L0 12.5Z" fill="#ff0018"/></svg>
<div class="a" style="left:375px;top:275px;width:2367.4px;height:2px;background:#212121;"></div>
<div class="a" style="left:375px;top:277px;width:2367.4px;height:2px;background:#b2b2b2;"></div>
<div class="a" style="left:375px;top:279px;width:2367.4px;height:292px;background:#939192;"></div>
<div class="a" style="left:375px;top:571px;width:2367.4px;height:2px;background:#1a1a1a;"></div>
<div class="a" style="left:375px;top:573px;width:2367.4px;height:2px;background:#b2b2b2;"></div>
<div class="a" style="left:375px;top:575px;width:2367.4px;height:292px;background:#7f909c;"></div>
<div class="a" style="left:375px;top:867px;width:2367.4px;height:2px;background:#1a1a1a;"></div>
<div class="a" style="left:375px;top:869px;width:2367.4px;height:2px;background:#b2b2b2;"></div>
<div class="a" style="left:375px;top:871px;width:2367.4px;height:292px;background:#939192;"></div>
<div class="a" style="left:375px;top:1163px;width:2367.4px;height:2px;background:#1a1a1a;"></div>
<div class="a" style="left:375px;top:1165px;width:2367.4px;height:2px;background:#b2b2b2;"></div>
<div class="a" style="left:375px;top:1167px;width:2367.4px;height:292px;background:#939192;"></div>
<div class="a" style="left:375px;top:1459px;width:2367.4px;height:2px;background:#1a1a1a;"></div>
<div class="a" style="left:654px;top:279px;width:2px;height:292px;background:#868686;"></div>
<div class="a" style="left:937px;top:279px;width:2px;height:292px;background:#868686;"></div>
<div class="a" style="left:1219px;top:279px;width:2px;height:292px;background:#868686;"></div>
<div class="a" style="left:1502px;top:279px;width:2px;height:292px;background:#868686;"></div>
<div class="a" style="left:1785px;top:279px;width:2px;height:292px;background:#868686;"></div>
<div class="a" style="left:2069px;top:279px;width:2px;height:292px;background:#868686;"></div>
<div class="a" style="left:2351px;top:279px;width:2px;height:292px;background:#868686;"></div>
<div class="a" style="left:2633px;top:279px;width:2px;height:292px;background:#868686;"></div>
<div class="a" style="left:654px;top:575px;width:2px;height:292px;background:#6f8090;"></div>
<div class="a" style="left:937px;top:575px;width:2px;height:292px;background:#6f8090;"></div>
<div class="a" style="left:1219px;top:575px;width:2px;height:292px;background:#6f8090;"></div>
<div class="a" style="left:1502px;top:575px;width:2px;height:292px;background:#6f8090;"></div>
<div class="a" style="left:1785px;top:575px;width:2px;height:292px;background:#6f8090;"></div>
<div class="a" style="left:2069px;top:575px;width:2px;height:292px;background:#6f8090;"></div>
<div class="a" style="left:2351px;top:575px;width:2px;height:292px;background:#6f8090;"></div>
<div class="a" style="left:2633px;top:575px;width:2px;height:292px;background:#6f8090;"></div>
<div class="a" style="left:654px;top:871px;width:2px;height:292px;background:#868686;"></div>
<div class="a" style="left:937px;top:871px;width:2px;height:292px;background:#868686;"></div>
<div class="a" style="left:1219px;top:871px;width:2px;height:292px;background:#868686;"></div>
<div class="a" style="left:1502px;top:871px;width:2px;height:292px;background:#868686;"></div>
<div class="a" style="left:1785px;top:871px;width:2px;height:292px;background:#868686;"></div>
<div class="a" style="left:2069px;top:871px;width:2px;height:292px;background:#868686;"></div>
<div class="a" style="left:2351px;top:871px;width:2px;height:292px;background:#868686;"></div>
<div class="a" style="left:2633px;top:871px;width:2px;height:292px;background:#868686;"></div>
<div class="a" style="left:654px;top:1167px;width:2px;height:292px;background:#868686;"></div>
<div class="a" style="left:937px;top:1167px;width:2px;height:292px;background:#868686;"></div>
<div class="a" style="left:1219px;top:1167px;width:2px;height:292px;background:#868686;"></div>
<div class="a" style="left:1502px;top:1167px;width:2px;height:292px;background:#868686;"></div>
<div class="a" style="left:1785px;top:1167px;width:2px;height:292px;background:#868686;"></div>
<div class="a" style="left:2069px;top:1167px;width:2px;height:292px;background:#868686;"></div>
<div class="a" style="left:2351px;top:1167px;width:2px;height:292px;background:#868686;"></div>
<div class="a" style="left:2633px;top:1167px;width:2px;height:292px;background:#868686;"></div>
<div class="a" style="left:375px;top:1461px;width:2367.4px;height:0.7px;background:#1a1a1a;"></div>
<div class="a" style="left:375px;top:1461.7px;width:2367.4px;height:343.3px;background:#2d3e47;"></div>
<svg class="a" style="left:0;top:0" width="2742" height="600" viewBox="0 0 2742 600" shape-rendering="auto"><defs><linearGradient id="cb" x1="0" y1="281" x2="0" y2="569" gradientUnits="userSpaceOnUse"><stop offset="0" stop-color="#7ea5e3"/><stop offset="1" stop-color="#6d95dc"/></linearGradient><clipPath id="cp1"><path d="M375 281H1024L1142 569H375Z"/></clipPath><clipPath id="cp2"><path d="M1083 425L1142 281H1910V569H1142Z"/></clipPath></defs><path d="M375 281H1024L1142 569H375Z" fill="url(#cb)"/><path d="M1024 569L1083 425L1142 569Z" fill="#74aafa"/><path d="M1097 569V459.2L1142 569Z" fill="#5c92e4"/><g clip-path="url(#cp1)"><path d="M374.0 569V517.7H376.0V512.8H378.0V527.6H380.0V553.6H382.0V569ZM446.0 569V426.5H448.0V385.5H450.0V369.0H452.0V369.6H454.0V363.1H456.0V362.8H458.0V363.0H460.0V381.6H462.0V371.8H464.0V374.5H466.0V376.2H468.0V368.2H470.0V366.6H472.0V366.9H474.0V368.3H476.0V374.1H478.0V378.8H480.0V376.3H482.0V371.4H484.0V387.0H486.0V387.5H488.0V393.7H490.0V394.3H492.0V384.3H494.0V385.8H496.0V389.4H498.0V395.3H500.0V411.7H502.0V468.3H504.0V569ZM510.0 569V424.6H512.0V369.6H514.0V363.5H516.0V373.6H518.0V374.6H520.0V381.4H522.0V369.6H524.0V378.0H526.0V367.2H528.0V368.3H530.0V380.5H532.0V389.4H534.0V395.2H536.0V470.2H538.0V569ZM540.0 569V447.0H542.0V426.2H544.0V569ZM548.0 569V442.6H550.0V389.5H552.0V376.4H554.0V373.4H556.0V372.3H558.0V379.5H560.0V385.0H562.0V382.9H564.0V375.3H566.0V373.5H568.0V376.5H570.0V380.8H572.0V370.3H574.0V375.0H576.0V386.2H578.0V500.9H580.0V569ZM580.0 569V409.8H582.0V370.3H584.0V374.8H586.0V379.3H588.0V384.4H590.0V403.8H592.0V569ZM598.0 569V428.3H600.0V379.5H602.0V376.1H604.0V369.1H606.0V384.1H608.0V408.9H610.0V569ZM614.0 569V427.9H616.0V373.5H618.0V369.7H620.0V377.2H622.0V369.0H624.0V378.8H626.0V373.0H628.0V390.9H630.0V502.6H632.0V569ZM636.0 569V442.2H638.0V388.5H640.0V375.3H642.0V383.4H644.0V374.6H646.0V380.6H648.0V380.9H650.0V386.2H652.0V381.1H654.0V387.8H656.0V373.7H658.0V383.2H660.0V380.3H662.0V380.2H664.0V380.0H666.0V387.7H668.0V392.5H670.0V443.2H672.0V441.7H674.0V444.7H676.0V448.1H678.0V477.7H680.0V510.7H682.0V569ZM684.0 569V558.6H686.0V528.3H688.0V524.2H690.0V520.0H692.0V518.7H694.0V526.3H696.0V533.1H698.0V539.7H700.0V547.8H702.0V555.2H704.0V562.4H706.0V569ZM724.0 569V429.5H726.0V370.8H728.0V365.6H730.0V365.5H732.0V362.5H734.0V367.2H736.0V363.7H738.0V374.0H740.0V381.3H742.0V383.4H744.0V372.1H746.0V377.1H748.0V381.0H750.0V375.7H752.0V381.7H754.0V394.5H756.0V422.1H758.0V477.2H760.0V547.2H762.0V569ZM762.0 569V444.4H764.0V378.6H766.0V370.0H768.0V370.9H770.0V371.2H772.0V377.1H774.0V374.7H776.0V378.1H778.0V381.4H780.0V385.0H782.0V394.2H784.0V382.8H786.0V387.4H788.0V394.1H790.0V386.8H792.0V385.0H794.0V392.7H796.0V391.8H798.0V387.4H800.0V383.3H802.0V390.0H804.0V386.7H806.0V393.2H808.0V395.2H810.0V387.4H812.0V400.9H814.0V399.7H816.0V404.4H818.0V491.8H820.0V569ZM926.0 569V559.5H928.0V557.2H930.0V569ZM980.0 569V533.9H982.0V463.5H984.0V429.7H986.0V404.8H988.0V373.4H990.0V381.7H992.0V407.4H994.0V392.1H996.0V402.9H998.0V399.5H1000.0V377.9H1002.0V368.6H1004.0V407.8H1006.0V401.0H1008.0V398.9H1010.0V400.4H1012.0V422.9H1014.0V451.1H1016.0V488.8H1018.0V569ZM1044.0 569V469.4H1046.0V446.3H1048.0V569ZM1050.0 569V540.9H1052.0V537.7H1054.0V533.5H1056.0V532.8H1058.0V536.4H1060.0V540.8H1062.0V568.0H1064.0V569ZM1062.0 569V446.4H1064.0V443.0H1066.0V438.8H1068.0V443.2H1070.0V446.9H1072.0V457.8H1074.0V455.6H1076.0V464.9H1078.0V468.8H1080.0V465.5H1082.0V469.9H1084.0V472.1H1086.0V475.2H1088.0V482.6H1090.0V482.0H1092.0V487.6H1094.0V487.7H1096.0V492.3H1098.0V569ZM1096.0 569V550.4H1098.0V528.0H1100.0V528.4H1102.0V527.8H1104.0V536.2H1106.0V555.9H1108.0V569ZM420.0 569V544.8H422.0V554.1H424.0V569Z" fill="#2e6ec6"/><path d="M374.0 569V524.5H376.0V520.3H378.0V530.8H380.0V554.8H382.0V569ZM446.0 569V450.3H448.0V403.0H450.0V395.6H452.0V388.5H454.0V382.2H456.0V383.3H458.0V390.9H460.0V402.8H462.0V396.2H464.0V394.6H466.0V386.6H468.0V390.9H470.0V381.5H472.0V388.7H474.0V386.7H476.0V389.5H478.0V395.0H480.0V397.3H482.0V396.5H484.0V397.7H486.0V404.2H488.0V408.5H490.0V408.7H492.0V409.9H494.0V404.3H496.0V409.9H498.0V413.8H500.0V424.5H502.0V481.7H504.0V569ZM510.0 569V443.2H512.0V391.7H514.0V389.4H516.0V386.4H518.0V390.4H520.0V400.3H522.0V394.0H524.0V390.5H526.0V394.4H528.0V391.2H530.0V393.8H532.0V402.9H534.0V410.4H536.0V479.1H538.0V569ZM540.0 569V500.5H542.0V489.1H544.0V569ZM548.0 569V456.0H550.0V412.2H552.0V400.4H554.0V396.5H556.0V401.8H558.0V400.4H560.0V403.5H562.0V398.2H564.0V399.6H566.0V399.3H568.0V395.2H570.0V399.5H572.0V397.7H574.0V401.7H576.0V403.6H578.0V508.8H580.0V569ZM580.0 569V429.4H582.0V383.5H584.0V387.7H586.0V393.2H588.0V402.1H590.0V419.9H592.0V569ZM598.0 569V445.8H600.0V401.9H602.0V395.1H604.0V396.1H606.0V395.7H608.0V425.4H610.0V569ZM614.0 569V442.8H616.0V393.5H618.0V396.2H620.0V395.0H622.0V396.0H624.0V396.7H626.0V401.3H628.0V408.4H630.0V511.1H632.0V569ZM636.0 569V455.0H638.0V402.3H640.0V399.7H642.0V402.6H644.0V397.0H646.0V398.1H648.0V400.0H650.0V405.4H652.0V400.0H654.0V401.0H656.0V402.5H658.0V397.9H660.0V398.5H662.0V404.3H664.0V406.8H666.0V402.6H668.0V414.3H670.0V456.8H672.0V458.9H674.0V463.1H676.0V466.9H678.0V488.5H680.0V515.5H682.0V569ZM684.0 569V569.0H686.0V569.0H688.0V569.0H690.0V569.0H692.0V569.0H694.0V569.0H696.0V569.0H698.0V569.0H700.0V569.0H702.0V569.0H704.0V569.0H706.0V569ZM724.0 569V439.6H726.0V388.6H728.0V388.9H730.0V381.4H732.0V384.5H734.0V385.5H736.0V392.1H738.0V390.5H740.0V395.5H742.0V394.0H744.0V401.3H746.0V398.2H748.0V397.8H750.0V404.1H752.0V406.5H754.0V412.9H756.0V434.7H758.0V484.8H760.0V549.4H762.0V569ZM762.0 569V457.1H764.0V399.2H766.0V389.7H768.0V393.3H770.0V399.8H772.0V400.1H774.0V404.7H776.0V398.6H778.0V402.5H780.0V407.6H782.0V403.2H784.0V405.0H786.0V409.4H788.0V412.8H790.0V413.1H792.0V405.8H794.0V410.6H796.0V406.2H798.0V410.1H800.0V410.0H802.0V406.3H804.0V410.8H806.0V412.5H808.0V410.4H810.0V413.6H812.0V414.6H814.0V414.7H816.0V428.9H818.0V500.2H820.0V569ZM926.0 569V569.0H928.0V569.0H930.0V569ZM980.0 569V538.7H982.0V479.9H984.0V449.1H986.0V418.2H988.0V396.2H990.0V396.5H992.0V421.6H994.0V410.8H996.0V422.3H998.0V420.8H1000.0V396.4H1002.0V393.7H1004.0V417.1H1006.0V426.1H1008.0V417.4H1010.0V419.5H1012.0V431.4H1014.0V460.7H1016.0V498.9H1018.0V569ZM1044.0 569V512.9H1046.0V503.6H1048.0V569ZM1050.0 569V569.0H1052.0V569.0H1054.0V569.0H1056.0V569.0H1058.0V569.0H1060.0V569.0H1062.0V569.0H1064.0V569ZM1062.0 569V464.0H1064.0V458.4H1066.0V456.5H1068.0V462.4H1070.0V463.3H1072.0V466.5H1074.0V469.3H1076.0V476.5H1078.0V475.3H1080.0V479.2H1082.0V480.9H1084.0V484.0H1086.0V486.7H1088.0V488.6H1090.0V491.3H1092.0V493.5H1094.0V497.3H1096.0V500.3H1098.0V569ZM1096.0 569V569.0H1098.0V569.0H1100.0V569.0H1102.0V569.0H1104.0V569.0H1106.0V569.0H1108.0V569ZM420.0 569V569.0H422.0V569.0H424.0V569Z" fill="#1f58a6"/><path d="M374.0 569V534.7H376.0V531.5H378.0V541.1H380.0V558.4H382.0V569ZM446.0 569V479.8H448.0V441.3H450.0V437.7H452.0V431.1H454.0V431.0H456.0V431.7H458.0V438.2H460.0V444.9H462.0V438.9H464.0V436.4H466.0V433.0H468.0V431.6H470.0V431.5H472.0V430.4H474.0V435.2H476.0V438.5H478.0V437.2H480.0V438.3H482.0V438.8H484.0V440.7H486.0V447.7H488.0V449.2H490.0V449.6H492.0V448.3H494.0V448.0H496.0V449.2H498.0V454.4H500.0V458.1H502.0V503.6H504.0V569ZM510.0 569V474.4H512.0V435.6H514.0V435.1H516.0V430.1H518.0V438.0H520.0V439.2H522.0V436.5H524.0V434.9H526.0V434.6H528.0V436.7H530.0V437.9H532.0V445.5H534.0V451.4H536.0V501.6H538.0V569ZM540.0 569V531.6H542.0V525.4H544.0V569ZM548.0 569V482.0H550.0V448.1H552.0V439.9H554.0V438.7H556.0V442.4H558.0V441.4H560.0V443.3H562.0V441.9H564.0V439.3H566.0V442.8H568.0V437.7H570.0V436.8H572.0V439.2H574.0V442.3H576.0V448.0H578.0V523.0H580.0V569ZM580.0 569V463.3H582.0V432.3H584.0V435.7H586.0V439.9H588.0V438.2H590.0V460.5H592.0V569ZM598.0 569V474.8H600.0V443.3H602.0V437.6H604.0V437.3H606.0V439.6H608.0V457.1H610.0V569ZM614.0 569V473.3H616.0V437.7H618.0V437.7H620.0V437.8H622.0V438.5H624.0V439.9H626.0V438.5H628.0V447.3H630.0V524.6H632.0V569ZM636.0 569V481.6H638.0V444.1H640.0V437.7H642.0V438.8H644.0V443.1H646.0V440.4H648.0V444.2H650.0V441.4H652.0V442.7H654.0V442.1H656.0V444.0H658.0V439.0H660.0V440.2H662.0V443.8H664.0V445.8H666.0V445.6H668.0V448.2H670.0V482.4H672.0V485.9H674.0V487.6H676.0V490.9H678.0V509.4H680.0V528.8H682.0V569ZM684.0 569V569.0H686.0V569.0H688.0V569.0H690.0V569.0H692.0V569.0H694.0V569.0H696.0V569.0H698.0V569.0H700.0V569.0H702.0V569.0H704.0V569.0H706.0V569ZM724.0 569V473.3H726.0V434.5H728.0V431.8H730.0V429.8H732.0V431.2H734.0V429.9H736.0V434.4H738.0V439.4H740.0V437.5H742.0V437.3H744.0V440.2H746.0V439.8H748.0V443.1H750.0V443.5H752.0V443.7H754.0V454.2H756.0V466.9H758.0V506.4H760.0V554.4H762.0V569ZM762.0 569V485.0H764.0V437.4H766.0V437.9H768.0V439.3H770.0V440.0H772.0V442.4H774.0V442.8H776.0V441.5H778.0V447.3H780.0V447.8H782.0V448.6H784.0V445.7H786.0V445.8H788.0V448.8H790.0V450.7H792.0V449.1H794.0V447.0H796.0V445.8H798.0V447.7H800.0V447.9H802.0V447.0H804.0V449.5H806.0V448.0H808.0V450.6H810.0V452.4H812.0V453.5H814.0V452.4H816.0V462.0H818.0V517.0H820.0V569ZM926.0 569V569.0H928.0V569.0H930.0V569ZM980.0 569V546.2H982.0V501.3H984.0V476.7H986.0V459.5H988.0V439.7H990.0V441.4H992.0V456.9H994.0V449.0H996.0V457.6H998.0V454.1H1000.0V436.4H1002.0V439.8H1004.0V456.7H1006.0V458.3H1008.0V455.9H1010.0V454.4H1012.0V468.8H1014.0V488.7H1016.0V515.8H1018.0V569ZM1044.0 569V538.4H1046.0V533.3H1048.0V569ZM1050.0 569V569.0H1052.0V569.0H1054.0V569.0H1056.0V569.0H1058.0V569.0H1060.0V569.0H1062.0V569.0H1064.0V569ZM1062.0 569V487.4H1064.0V486.0H1066.0V485.4H1068.0V487.1H1070.0V492.3H1072.0V493.9H1074.0V496.2H1076.0V498.5H1078.0V500.6H1080.0V502.1H1082.0V504.8H1084.0V506.4H1086.0V507.9H1088.0V509.9H1090.0V511.3H1092.0V512.5H1094.0V513.8H1096.0V516.4H1098.0V569ZM1096.0 569V569.0H1098.0V569.0H1100.0V569.0H1102.0V569.0H1104.0V569.0H1106.0V569.0H1108.0V569ZM420.0 569V569.0H422.0V569.0H424.0V569Z" fill="#204a86"/></g><path d="M1083 425L1142 281H1910V569H1142Z" fill="url(#cb)"/><g clip-path="url(#cp2)"><path d="M1096.0 569V461.4H1098.0V415.7H1100.0V417.1H1102.0V411.3H1104.0V401.3H1106.0V396.5H1108.0V391.8H1110.0V390.6H1112.0V386.0H1114.0V380.8H1116.0V382.3H1118.0V368.6H1120.0V373.3H1122.0V366.7H1124.0V359.0H1126.0V351.6H1128.0V346.8H1130.0V352.5H1132.0V352.3H1134.0V347.2H1136.0V344.6H1138.0V333.0H1140.0V335.6H1142.0V329.0H1144.0V345.9H1146.0V337.4H1148.0V354.0H1150.0V361.2H1152.0V435.4H1154.0V518.4H1156.0V569ZM1160.0 569V332.9H1162.0V318.6H1164.0V320.4H1166.0V323.5H1168.0V328.0H1170.0V320.5H1172.0V324.9H1174.0V332.7H1176.0V339.3H1178.0V331.7H1180.0V333.3H1182.0V345.5H1184.0V344.4H1186.0V383.0H1188.0V569ZM1190.0 569V414.2H1192.0V369.7H1194.0V428.0H1196.0V569ZM1196.0 569V413.2H1198.0V342.7H1200.0V351.3H1202.0V352.3H1204.0V385.7H1206.0V569ZM1206.0 569V410.8H1208.0V358.4H1210.0V341.4H1212.0V346.2H1214.0V337.6H1216.0V355.9H1218.0V351.3H1220.0V359.1H1222.0V356.6H1224.0V348.3H1226.0V364.3H1228.0V403.0H1230.0V569ZM1230.0 569V350.1H1232.0V337.3H1234.0V332.1H1236.0V345.5H1238.0V359.4H1240.0V356.5H1242.0V390.9H1244.0V569ZM1248.0 569V415.8H1250.0V353.5H1252.0V348.3H1254.0V349.8H1256.0V357.3H1258.0V367.9H1260.0V360.7H1262.0V569ZM1264.0 569V413.6H1266.0V360.4H1268.0V355.4H1270.0V363.4H1272.0V366.2H1274.0V372.5H1276.0V365.8H1278.0V419.1H1280.0V569ZM1282.0 569V424.0H1284.0V405.5H1286.0V569ZM1286.0 569V421.5H1288.0V375.3H1290.0V375.4H1292.0V369.8H1294.0V369.0H1296.0V374.5H1298.0V371.5H1300.0V380.1H1302.0V381.8H1304.0V379.7H1306.0V374.7H1308.0V376.1H1310.0V381.9H1312.0V379.9H1314.0V380.7H1316.0V382.8H1318.0V388.7H1320.0V393.9H1322.0V423.8H1324.0V449.9H1326.0V459.3H1328.0V474.7H1330.0V510.7H1332.0V547.4H1334.0V569ZM1336.0 569V548.7H1338.0V534.3H1340.0V533.2H1342.0V530.4H1344.0V531.8H1346.0V537.4H1348.0V543.3H1350.0V549.8H1352.0V558.1H1354.0V566.0H1356.0V569ZM1374.0 569V427.8H1376.0V381.7H1378.0V382.8H1380.0V378.3H1382.0V379.9H1384.0V385.5H1386.0V385.8H1388.0V388.0H1390.0V396.0H1392.0V397.9H1394.0V401.6H1396.0V401.8H1398.0V395.8H1400.0V403.8H1402.0V421.8H1404.0V424.2H1406.0V468.7H1408.0V569ZM1412.0 569V391.3H1414.0V389.9H1416.0V393.6H1418.0V385.5H1420.0V386.1H1422.0V389.7H1424.0V388.6H1426.0V388.9H1428.0V395.2H1430.0V402.8H1432.0V407.8H1434.0V407.7H1436.0V403.4H1438.0V410.5H1440.0V409.1H1442.0V404.5H1444.0V402.5H1446.0V408.0H1448.0V399.8H1450.0V401.7H1452.0V400.8H1454.0V409.0H1456.0V412.6H1458.0V408.4H1460.0V403.9H1462.0V419.6H1464.0V419.1H1466.0V423.1H1468.0V460.3H1470.0V532.4H1472.0V569ZM1630.0 569V531.3H1632.0V463.2H1634.0V445.0H1636.0V427.0H1638.0V397.9H1640.0V396.6H1642.0V423.8H1644.0V406.3H1646.0V394.2H1648.0V398.9H1650.0V394.0H1652.0V388.4H1654.0V426.0H1656.0V421.0H1658.0V412.2H1660.0V413.2H1662.0V429.7H1664.0V444.4H1666.0V498.4H1668.0V550.5H1670.0V569ZM1694.0 569V431.8H1696.0V511.8H1698.0V569ZM1700.0 569V554.3H1702.0V531.9H1704.0V533.5H1706.0V534.4H1708.0V530.4H1710.0V510.0H1712.0V482.0H1714.0V569ZM1712.0 569V424.3H1714.0V401.6H1716.0V389.1H1718.0V387.3H1720.0V396.9H1722.0V400.4H1724.0V383.8H1726.0V387.9H1728.0V396.9H1730.0V407.5H1732.0V399.4H1734.0V384.7H1736.0V383.3H1738.0V392.1H1740.0V379.0H1742.0V373.8H1744.0V377.3H1746.0V388.4H1748.0V492.7H1750.0V569ZM1750.0 569V488.8H1752.0V459.0H1754.0V503.6H1756.0V569ZM1826.0 569V430.2H1828.0V569ZM1830.0 569V466.9H1832.0V569ZM1874.0 569V383.1H1876.0V372.7H1878.0V376.9H1880.0V383.1H1882.0V386.4H1884.0V378.1H1886.0V379.4H1888.0V379.1H1890.0V367.3H1892.0V381.6H1894.0V383.0H1896.0V388.0H1898.0V389.0H1900.0V393.7H1902.0V429.7H1904.0V453.3H1906.0V459.1H1908.0V466.5H1910.0V569Z" fill="#2e6ec6"/><path d="M1096.0 569V472.5H1098.0V434.1H1100.0V426.9H1102.0V422.1H1104.0V421.4H1106.0V414.8H1108.0V409.3H1110.0V404.1H1112.0V406.7H1114.0V395.5H1116.0V396.1H1118.0V389.8H1120.0V386.3H1122.0V382.3H1124.0V379.7H1126.0V381.9H1128.0V372.8H1130.0V377.7H1132.0V372.8H1134.0V371.2H1136.0V366.5H1138.0V359.9H1140.0V357.3H1142.0V361.6H1144.0V360.6H1146.0V369.6H1148.0V367.1H1150.0V384.7H1152.0V450.5H1154.0V521.4H1156.0V569ZM1160.0 569V365.4H1162.0V356.3H1164.0V340.6H1166.0V347.4H1168.0V355.7H1170.0V348.3H1172.0V351.2H1174.0V357.2H1176.0V363.3H1178.0V364.7H1180.0V356.5H1182.0V365.0H1184.0V369.7H1186.0V404.4H1188.0V569ZM1190.0 569V486.1H1192.0V459.3H1194.0V491.4H1196.0V569ZM1196.0 569V430.0H1198.0V377.7H1200.0V369.6H1202.0V376.3H1204.0V401.1H1206.0V569ZM1206.0 569V425.5H1208.0V381.2H1210.0V371.7H1212.0V371.0H1214.0V371.6H1216.0V378.8H1218.0V379.6H1220.0V375.8H1222.0V370.4H1224.0V372.0H1226.0V377.8H1228.0V413.1H1230.0V569ZM1230.0 569V374.2H1232.0V360.2H1234.0V364.7H1236.0V368.7H1238.0V375.1H1240.0V382.7H1242.0V413.8H1244.0V569ZM1248.0 569V431.6H1250.0V382.9H1252.0V380.8H1254.0V378.8H1256.0V378.5H1258.0V386.7H1260.0V392.1H1262.0V569ZM1264.0 569V430.5H1266.0V383.9H1268.0V378.6H1270.0V377.7H1272.0V380.5H1274.0V390.7H1276.0V394.6H1278.0V436.2H1280.0V569ZM1282.0 569V493.1H1284.0V480.4H1286.0V569ZM1286.0 569V439.8H1288.0V388.2H1290.0V387.9H1292.0V389.4H1294.0V392.9H1296.0V394.6H1298.0V393.9H1300.0V394.7H1302.0V396.2H1304.0V396.8H1306.0V401.9H1308.0V396.9H1310.0V399.7H1312.0V396.4H1314.0V406.8H1316.0V408.7H1318.0V404.3H1320.0V408.5H1322.0V442.8H1324.0V468.9H1326.0V475.1H1328.0V484.5H1330.0V517.3H1332.0V549.6H1334.0V569ZM1336.0 569V569.0H1338.0V569.0H1340.0V569.0H1342.0V569.0H1344.0V569.0H1346.0V569.0H1348.0V569.0H1350.0V569.0H1352.0V569.0H1354.0V569.0H1356.0V569ZM1374.0 569V448.9H1376.0V400.2H1378.0V396.2H1380.0V396.0H1382.0V398.4H1384.0V398.8H1386.0V406.4H1388.0V414.8H1390.0V412.7H1392.0V415.9H1394.0V413.2H1396.0V416.5H1398.0V412.9H1400.0V421.9H1402.0V442.0H1404.0V440.2H1406.0V480.8H1408.0V569ZM1412.0 569V416.6H1414.0V408.0H1416.0V410.5H1418.0V406.3H1420.0V410.3H1422.0V410.1H1424.0V407.7H1426.0V411.1H1428.0V413.2H1430.0V421.1H1432.0V422.0H1434.0V418.1H1436.0V420.1H1438.0V419.7H1440.0V424.9H1442.0V424.4H1444.0V420.3H1446.0V423.6H1448.0V425.5H1450.0V422.2H1452.0V427.0H1454.0V423.7H1456.0V422.9H1458.0V426.4H1460.0V425.6H1462.0V434.1H1464.0V432.2H1466.0V443.6H1468.0V471.4H1470.0V536.1H1472.0V569ZM1630.0 569V536.4H1632.0V473.3H1634.0V456.7H1636.0V439.4H1638.0V415.1H1640.0V415.9H1642.0V436.0H1644.0V430.2H1646.0V414.3H1648.0V415.2H1650.0V407.5H1652.0V411.6H1654.0V433.3H1656.0V439.1H1658.0V431.9H1660.0V430.9H1662.0V447.0H1664.0V459.3H1666.0V509.0H1668.0V552.2H1670.0V569ZM1694.0 569V495.9H1696.0V537.6H1698.0V569ZM1700.0 569V556.5H1702.0V535.2H1704.0V537.3H1706.0V539.4H1708.0V534.5H1710.0V515.4H1712.0V489.1H1714.0V569ZM1712.0 569V445.9H1714.0V419.3H1716.0V407.0H1718.0V409.8H1720.0V412.1H1722.0V411.5H1724.0V409.6H1726.0V410.0H1728.0V416.1H1730.0V418.7H1732.0V414.5H1734.0V415.8H1736.0V410.8H1738.0V406.5H1740.0V396.8H1742.0V394.5H1744.0V397.6H1746.0V402.6H1748.0V498.0H1750.0V569ZM1750.0 569V523.6H1752.0V510.8H1754.0V531.9H1756.0V569ZM1826.0 569V490.9H1828.0V569ZM1830.0 569V513.5H1832.0V569ZM1874.0 569V406.3H1876.0V398.8H1878.0V395.7H1880.0V401.9H1882.0V405.8H1884.0V401.1H1886.0V398.6H1888.0V397.7H1890.0V401.4H1892.0V395.7H1894.0V398.7H1896.0V400.9H1898.0V404.4H1900.0V414.8H1902.0V446.6H1904.0V464.6H1906.0V467.4H1908.0V476.4H1910.0V569Z" fill="#1f58a6"/><path d="M1096.0 569V496.1H1098.0V466.7H1100.0V462.7H1102.0V458.5H1104.0V456.6H1106.0V450.8H1108.0V449.7H1110.0V445.7H1112.0V442.5H1114.0V439.3H1116.0V435.9H1118.0V436.9H1120.0V435.1H1122.0V432.1H1124.0V429.9H1126.0V427.1H1128.0V425.5H1130.0V418.9H1132.0V421.0H1134.0V417.2H1136.0V415.7H1138.0V412.5H1140.0V414.7H1142.0V414.4H1144.0V414.9H1146.0V414.8H1148.0V418.7H1150.0V427.9H1152.0V478.8H1154.0V533.7H1156.0V569ZM1160.0 569V414.8H1162.0V403.8H1164.0V403.8H1166.0V402.5H1168.0V407.0H1170.0V405.1H1172.0V408.4H1174.0V411.8H1176.0V419.0H1178.0V416.4H1180.0V413.6H1182.0V414.9H1184.0V422.6H1186.0V444.7H1188.0V569ZM1190.0 569V523.8H1192.0V509.2H1194.0V526.7H1196.0V569ZM1196.0 569V461.8H1198.0V419.0H1200.0V415.4H1202.0V418.1H1204.0V443.5H1206.0V569ZM1206.0 569V462.4H1208.0V424.0H1210.0V417.9H1212.0V417.1H1214.0V423.9H1216.0V424.3H1218.0V425.0H1220.0V423.0H1222.0V422.5H1224.0V423.9H1226.0V426.8H1228.0V454.6H1230.0V569ZM1230.0 569V419.4H1232.0V415.0H1234.0V416.4H1236.0V420.1H1238.0V427.3H1240.0V430.7H1242.0V446.9H1244.0V569ZM1248.0 569V465.8H1250.0V425.5H1252.0V424.7H1254.0V426.0H1256.0V430.0H1258.0V431.1H1260.0V432.9H1262.0V569ZM1264.0 569V464.7H1266.0V426.6H1268.0V424.1H1270.0V428.6H1272.0V428.1H1274.0V435.1H1276.0V435.4H1278.0V468.1H1280.0V569ZM1282.0 569V527.6H1284.0V520.7H1286.0V569ZM1286.0 569V471.0H1288.0V437.7H1290.0V435.1H1292.0V436.8H1294.0V434.6H1296.0V440.1H1298.0V438.6H1300.0V439.1H1302.0V438.9H1304.0V439.0H1306.0V441.0H1308.0V439.5H1310.0V439.5H1312.0V441.3H1314.0V443.1H1316.0V446.9H1318.0V447.0H1320.0V450.2H1322.0V476.7H1324.0V492.2H1326.0V497.8H1328.0V505.6H1330.0V529.5H1332.0V554.1H1334.0V569ZM1336.0 569V569.0H1338.0V569.0H1340.0V569.0H1342.0V569.0H1344.0V569.0H1346.0V569.0H1348.0V569.0H1350.0V569.0H1352.0V569.0H1354.0V569.0H1356.0V569ZM1374.0 569V477.2H1376.0V444.1H1378.0V440.2H1380.0V438.3H1382.0V439.8H1384.0V443.3H1386.0V445.5H1388.0V448.5H1390.0V450.2H1392.0V451.1H1394.0V453.6H1396.0V455.0H1398.0V451.9H1400.0V457.5H1402.0V473.1H1404.0V470.1H1406.0V503.5H1408.0V569ZM1412.0 569V451.1H1414.0V447.0H1416.0V448.9H1418.0V448.9H1420.0V446.4H1422.0V445.9H1424.0V447.7H1426.0V449.2H1428.0V453.5H1430.0V457.4H1432.0V458.9H1434.0V459.8H1436.0V459.6H1438.0V460.7H1440.0V457.9H1442.0V460.2H1444.0V458.7H1446.0V458.2H1448.0V456.3H1450.0V459.4H1452.0V459.3H1454.0V461.5H1456.0V460.8H1458.0V463.1H1460.0V461.3H1462.0V465.2H1464.0V468.4H1466.0V471.2H1468.0V493.1H1470.0V544.0H1472.0V569ZM1630.0 569V544.0H1632.0V498.8H1634.0V484.7H1636.0V469.3H1638.0V452.5H1640.0V450.7H1642.0V470.4H1644.0V461.4H1646.0V453.9H1648.0V451.2H1650.0V446.5H1652.0V449.7H1654.0V467.9H1656.0V470.8H1658.0V464.4H1660.0V464.5H1662.0V474.5H1664.0V488.6H1666.0V523.2H1668.0V556.7H1670.0V569ZM1694.0 569V529.1H1696.0V551.9H1698.0V569ZM1700.0 569V559.3H1702.0V543.3H1704.0V544.8H1706.0V546.3H1708.0V543.8H1710.0V528.2H1712.0V509.3H1714.0V569ZM1712.0 569V472.8H1714.0V456.0H1716.0V448.1H1718.0V447.4H1720.0V453.9H1722.0V451.1H1724.0V448.0H1726.0V445.4H1728.0V454.3H1730.0V455.0H1732.0V453.6H1734.0V451.0H1736.0V449.4H1738.0V446.5H1740.0V442.6H1742.0V438.8H1744.0V435.9H1746.0V443.4H1748.0V517.4H1750.0V569ZM1750.0 569V544.2H1752.0V537.2H1754.0V548.8H1756.0V569ZM1826.0 569V526.4H1828.0V569ZM1830.0 569V538.7H1832.0V569ZM1874.0 569V449.2H1876.0V443.2H1878.0V442.4H1880.0V441.3H1882.0V443.1H1884.0V444.0H1886.0V440.1H1888.0V440.8H1890.0V439.9H1892.0V438.6H1894.0V441.1H1896.0V440.8H1898.0V445.1H1900.0V448.3H1902.0V476.8H1904.0V490.7H1906.0V494.6H1908.0V499.5H1910.0V569Z" fill="#204a86"/></g><rect x="654" y="284" width="2" height="285" fill="rgba(60,90,150,.13)"/><rect x="937" y="284" width="2" height="285" fill="rgba(60,90,150,.13)"/><rect x="1219" y="284" width="2" height="285" fill="rgba(60,90,150,.13)"/><rect x="1502" y="284" width="2" height="285" fill="rgba(60,90,150,.13)"/><rect x="1785" y="284" width="2" height="285" fill="rgba(60,90,150,.13)"/><path d="M376 284.4H1025" stroke="#a8deee" stroke-width="3"/><path d="M1141 284.4H1909" stroke="#a8deee" stroke-width="3"/><path d="M375 281.8H1024.3L1142 569" fill="none" stroke="#15195a" stroke-width="2.2"/><path d="M1024 569L1141.7 281.8H1910V570" fill="none" stroke="#15195a" stroke-width="2.2"/><path d="M375 570H1911" stroke="#15195a" stroke-width="2.6"/><path d="M1085.6 425L1143.4 284" fill="none" stroke="#bfe8f2" stroke-width="1.3" stroke-dasharray="1.6 2.6"/></svg>
<div class="t" style="left:385.30px;top:544.65px;font-size:20.5px;line-height:20.5px;color:#fff;font-weight:400;letter-spacing:0.25px;text-shadow:1.6px 1.6px 0.8px rgba(35,35,50,.95);-webkit-text-stroke:0.45px #fff;">Speak 6</div>
<div class="t" style="left:1153.30px;top:544.65px;font-size:20.5px;line-height:20.5px;color:#fff;font-weight:400;letter-spacing:0.25px;text-shadow:1.6px 1.6px 0.8px rgba(35,35,50,.95);-webkit-text-stroke:0.45px #fff;">Speak 6</div><div class="a" style="left:2742.4px;top:218px;width:8.6px;height:1587px;background:#424242;"></div>
<div class="a" style="left:2742.4px;top:218px;width:2.2px;height:1587px;background:#262626;"></div>
<div class="a" style="left:2749.6px;top:218px;width:1.4px;height:1587px;background:#262626;"></div>
<div class="a" style="left:2751px;top:218px;width:401px;height:1587px;background:#3f3f3f;"></div>
<div class="a" style="left:3152px;top:218px;width:2px;height:1587px;background:#111;"></div>
<div class="a" style="left:2751px;top:217px;width:401px;height:30.4px;background:linear-gradient(#f4f4f4 0,#f4f4f4 1.6px,#cbcbcb 2.5px,#b4b4b4 45%,#8c8c8c 100%);"></div><div class="a" style="left:2751px;top:247.4px;width:401px;height:3px;background:#1a1a1a;"></div><div class="t" style="left:2957.40px;top:222.93px;font-size:23px;line-height:23px;color:#000;font-weight:400;transform:translateX(-50%) scaleX(1.035);transform-origin:50% 0;letter-spacing:0.35px;text-shadow:0 1px 0 rgba(255,255,255,.45);">Clipboard</div><div class="a" style="left:3092.6px;top:222.4px;width:21px;height:21.3px;background:#878787;border-radius:4px;box-shadow:inset 0 0 0 1px rgba(150,150,150,.6);"></div><svg class="a" style="left:3092.6px;top:222.4px;" width="21" height="21.3" viewBox="0 0 21 21.3"><path d="M7.2 4.2H13.8V10.8H7.2Z" fill="none" stroke="#f2f2f2" stroke-width="1.8"/><path d="M4.6 11.2H16.4" stroke="#f2f2f2" stroke-width="2"/><path d="M10.5 11.5V18.5" stroke="#f2f2f2" stroke-width="1.8"/></svg><div class="a" style="left:3122.3px;top:222.4px;width:21.4px;height:21.3px;background:#878787;border-radius:4px;box-shadow:inset 0 0 0 1px rgba(150,150,150,.6);"></div><svg class="a" style="left:3122.3px;top:222.4px;" width="21.4" height="21.3" viewBox="0 0 21.4 21.3"><path d="M4 3.8L17.4 17.5M17.4 3.8L4 17.5" stroke="#f4f4f4" stroke-width="2"/></svg>
<div class="a" style="left:2751px;top:250px;width:401px;height:36.5px;background:linear-gradient(#4a4a4a 0,#3a3a3a 1.5px,#2e2e2e 30%,#141414 85%,#0c0c0c 100%);"></div>
<div class="t" style="left:2756.30px;top:261.33px;font-size:16.5px;line-height:16.5px;color:#a6a6a6;font-weight:400;letter-spacing:-0.45px;">Alt+1</div>
<div class="t" style="left:2951.30px;top:256.68px;font-size:22px;line-height:22px;color:#fff;font-weight:700;transform:translateX(-50%) scaleX(0.97);transform-origin:50% 0;">Group 1</div>
<div class="a" style="left:2751px;top:286.5px;width:401px;height:152px;background:#464646;"></div>
<div class="a" style="left:2751px;top:438.5px;width:401px;height:1.5px;background:#2a2a2a;"></div>
<div class="a" style="left:2751px;top:286.5px;width:1px;height:152px;background:#333;"></div>
<div class="a" style="left:2751px;top:440px;width:401px;height:36.5px;background:linear-gradient(#4a4a4a 0,#3a3a3a 1.5px,#2e2e2e 30%,#141414 85%,#0c0c0c 100%);"></div>
<div class="t" style="left:2756.30px;top:451.33px;font-size:16.5px;line-height:16.5px;color:#a6a6a6;font-weight:400;letter-spacing:-0.45px;">Alt+2</div>
<div class="t" style="left:2951.30px;top:446.68px;font-size:22px;line-height:22px;color:#fff;font-weight:700;transform:translateX(-50%) scaleX(0.97);transform-origin:50% 0;">Group 2</div>
<div class="a" style="left:2751px;top:476.5px;width:401px;height:152px;background:linear-gradient(#2a2a2a,#202020);"></div>
<div class="a" style="left:2751px;top:628.5px;width:401px;height:1.5px;background:#383838;"></div>
<div class="a" style="left:2751px;top:476.5px;width:1px;height:152px;background:#333;"></div>
<div class="a" style="left:2751px;top:630px;width:401px;height:36.5px;background:linear-gradient(#4a4a4a 0,#3a3a3a 1.5px,#2e2e2e 30%,#141414 85%,#0c0c0c 100%);"></div>
<div class="t" style="left:2756.30px;top:641.33px;font-size:16.5px;line-height:16.5px;color:#a6a6a6;font-weight:400;letter-spacing:-0.45px;">Alt+3</div>
<div class="t" style="left:2951.30px;top:636.68px;font-size:22px;line-height:22px;color:#fff;font-weight:700;transform:translateX(-50%) scaleX(0.97);transform-origin:50% 0;">Group 3</div>
<div class="a" style="left:2751px;top:666.5px;width:401px;height:152px;background:#464646;"></div>
<div class="a" style="left:2751px;top:818.5px;width:401px;height:1.5px;background:#2a2a2a;"></div>
<div class="a" style="left:2751px;top:666.5px;width:1px;height:152px;background:#333;"></div>
<div class="a" style="left:2751px;top:820px;width:401px;height:36.5px;background:linear-gradient(#4a4a4a 0,#3a3a3a 1.5px,#2e2e2e 30%,#141414 85%,#0c0c0c 100%);"></div>
<div class="t" style="left:2756.30px;top:831.33px;font-size:16.5px;line-height:16.5px;color:#a6a6a6;font-weight:400;letter-spacing:-0.45px;">Alt+4</div>
<div class="t" style="left:2951.30px;top:826.68px;font-size:22px;line-height:22px;color:#fff;font-weight:700;transform:translateX(-50%) scaleX(0.97);transform-origin:50% 0;">Group 4</div>
<div class="a" style="left:2751px;top:856.5px;width:401px;height:152px;background:linear-gradient(#2a2a2a,#202020);"></div>
<div class="a" style="left:2751px;top:1008.5px;width:401px;height:1.5px;background:#383838;"></div>
<div class="a" style="left:2751px;top:856.5px;width:1px;height:152px;background:#333;"></div>
<div class="a" style="left:2751px;top:1004.6px;width:401px;height:3.7px;background:#262626;"></div>
<div class="a" style="left:2751px;top:1014.7px;width:401px;height:30.4px;background:linear-gradient(#f4f4f4 0,#f4f4f4 1.6px,#cbcbcb 2.5px,#b4b4b4 45%,#8c8c8c 100%);"></div><div class="a" style="left:2751px;top:1045.1000000000001px;width:401px;height:3px;background:#1a1a1a;"></div><div class="t" style="left:2956.40px;top:1020.73px;font-size:23px;line-height:23px;color:#000;font-weight:400;transform:translateX(-50%) scaleX(1.035);transform-origin:50% 0;letter-spacing:0.35px;text-shadow:0 1px 0 rgba(255,255,255,.45);">Markers</div><div class="a" style="left:3092.6px;top:1020.1px;width:21px;height:21.3px;background:#878787;border-radius:4px;box-shadow:inset 0 0 0 1px rgba(150,150,150,.6);"></div><svg class="a" style="left:3092.6px;top:1020.1px;" width="21" height="21.3" viewBox="0 0 21 21.3"><path d="M7.2 4.2H13.8V10.8H7.2Z" fill="none" stroke="#f2f2f2" stroke-width="1.8"/><path d="M4.6 11.2H16.4" stroke="#f2f2f2" stroke-width="2"/><path d="M10.5 11.5V18.5" stroke="#f2f2f2" stroke-width="1.8"/></svg><div class="a" style="left:3122.3px;top:1020.1px;width:21.4px;height:21.3px;background:#878787;border-radius:4px;box-shadow:inset 0 0 0 1px rgba(150,150,150,.6);"></div><svg class="a" style="left:3122.3px;top:1020.1px;" width="21.4" height="21.3" viewBox="0 0 21.4 21.3"><path d="M4 3.8L17.4 17.5M17.4 3.8L4 17.5" stroke="#f4f4f4" stroke-width="2"/></svg>
<div class="a" style="left:2751px;top:1048px;width:401px;height:44px;background:linear-gradient(#626262 0%,#6e6e6e 12%,#7b7b7b 45%,#727272 65%,#5a5a5a 100%);"></div>
<div class="a" style="left:2751px;top:1092px;width:401px;height:713px;background:#2f2f2f;"></div>
<div class="a" style="left:2751px;top:1133.4px;width:401px;height:2.2px;background:#585858;"></div>
<div class="a" style="left:2751px;top:1803.4px;width:401px;height:1.2px;background:#4e4e4e;"></div>
<svg class="a" style="left:2768.8px;top:1062px;" width="17" height="16" viewBox="0 0 17 16"><defs><linearGradient id="mta" x1="0" y1="0" x2="0" y2="1"><stop offset="0" stop-color="#ffffff"/><stop offset="1" stop-color="#a0a0a0"/></linearGradient></defs><path d="M1 2H15.6L8.3 15Z" fill="rgba(0,0,0,.35)"/><path d="M1 1H15.6L8.3 13.6Z" fill="url(#mta)"/></svg>
<svg class="a" style="left:2768.8px;top:1106.8px;" width="17" height="16" viewBox="0 0 17 16"><defs><linearGradient id="mtb" x1="0" y1="0" x2="0" y2="1"><stop offset="0" stop-color="#ffffff"/><stop offset="1" stop-color="#a0a0a0"/></linearGradient></defs><path d="M1 2H15.6L8.3 15Z" fill="rgba(0,0,0,.35)"/><path d="M1 1H15.6L8.3 13.6Z" fill="url(#mtb)"/></svg>
<div class="t" style="left:2817.40px;top:1054.68px;font-size:24px;line-height:24px;color:#fff;font-weight:400;-webkit-text-stroke:0.3px #fff;">1</div>
<div class="t" style="left:2841.20px;top:1054.68px;font-size:24px;line-height:24px;color:#fff;font-weight:400;-webkit-text-stroke:0.3px #fff;">In</div>
<div class="t" style="left:2817.00px;top:1098.98px;font-size:24px;line-height:24px;color:#fff;font-weight:400;-webkit-text-stroke:0.3px #fff;">2</div>
<div class="t" style="left:2841.00px;top:1098.98px;font-size:24px;line-height:24px;color:#fff;font-weight:400;-webkit-text-stroke:0.3px #fff;">Out</div>
<div class="t" style="left:3144.00px;top:1054.68px;font-size:24px;line-height:24px;color:#fff;font-weight:400;transform:translateX(-100%);-webkit-text-stroke:0.3px #fff;">0:00</div>
<div class="t" style="left:3144.00px;top:1098.98px;font-size:24px;line-height:24px;color:#fff;font-weight:400;transform:translateX(-100%);-webkit-text-stroke:0.3px #fff;">0:00</div><div class="a" style="left:112px;top:76px;width:3042px;height:44px;background:linear-gradient(rgba(233,233,233,.996) 0%,rgba(224,224,224,.996) 45%,rgba(208,208,208,.996) 100%);box-shadow:inset 0 1px 0 #f6f6f6;"></div>
<div class="a" style="left:128px;top:86px;width:24px;height:24px;background:#ff5f57;border-radius:50%;box-shadow:inset 0 0 0 1px rgba(0,0,0,.12);"></div>
<div class="a" style="left:168px;top:86px;width:24px;height:24px;background:#febc2e;border-radius:50%;box-shadow:inset 0 0 0 1px rgba(0,0,0,.12);"></div>
<div class="a" style="left:208px;top:86px;width:24px;height:24px;background:#28c840;border-radius:50%;box-shadow:inset 0 0 0 1px rgba(0,0,0,.12);"></div>
<div class="a" style="left:136px;top:94px;width:8px;height:8px;background:#4d0c10;border-radius:50%;"></div>
<div class="t" style="left:1633.00px;top:85.99px;font-size:26px;line-height:26px;color:#4a4a4a;font-weight:400;transform:translateX(-50%) scaleX(1.045);transform-origin:50% 0;letter-spacing:0.25px;">Untitled - Hindenburg Trial</div>
<div class="a" style="left:112px;top:120px;width:3042px;height:96px;background:linear-gradient(rgba(48,50,50,.996) 0%,rgba(39,41,41,.996) 45%,rgba(26,28,28,.996) 80%,rgba(20,22,22,.996) 100%);"></div>
<div class="a" style="left:112px;top:216px;width:3042px;height:1px;background:#383a3a;"></div>
<div class="a" style="left:112px;top:217px;width:3042px;height:1px;background:#050505;"></div>
<div class="a" style="left:117px;top:129px;width:3px;height:3px;background:#b6b6b6;"></div>
<div class="a" style="left:118px;top:130px;width:1px;height:1px;background:#2a2c2c;"></div>
<div class="a" style="left:119px;top:131px;width:4px;height:3px;background:#727272;"></div>
<div class="a" style="left:117px;top:137px;width:3px;height:3px;background:#b6b6b6;"></div>
<div class="a" style="left:118px;top:138px;width:1px;height:1px;background:#2a2c2c;"></div>
<div class="a" style="left:119px;top:139px;width:4px;height:3px;background:#727272;"></div>
<div class="a" style="left:117px;top:145px;width:3px;height:3px;background:#b6b6b6;"></div>
<div class="a" style="left:118px;top:146px;width:1px;height:1px;background:#2a2c2c;"></div>
<div class="a" style="left:119px;top:147px;width:4px;height:3px;background:#727272;"></div>
<div class="a" style="left:117px;top:153px;width:3px;height:3px;background:#b6b6b6;"></div>
<div class="a" style="left:118px;top:154px;width:1px;height:1px;background:#2a2c2c;"></div>
<div class="a" style="left:119px;top:155px;width:4px;height:3px;background:#727272;"></div>
<div class="a" style="left:117px;top:161px;width:3px;height:3px;background:#b6b6b6;"></div>
<div class="a" style="left:118px;top:162px;width:1px;height:1px;background:#2a2c2c;"></div>
<div class="a" style="left:119px;top:163px;width:4px;height:3px;background:#727272;"></div>
<div class="a" style="left:117px;top:169px;width:3px;height:3px;background:#b6b6b6;"></div>
<div class="a" style="left:118px;top:170px;width:1px;height:1px;background:#2a2c2c;"></div>
<div class="a" style="left:119px;top:171px;width:4px;height:3px;background:#727272;"></div>
<div class="a" style="left:117px;top:177px;width:3px;height:3px;background:#b6b6b6;"></div>
<div class="a" style="left:118px;top:178px;width:1px;height:1px;background:#2a2c2c;"></div>
<div class="a" style="left:119px;top:179px;width:4px;height:3px;background:#727272;"></div>
<div class="a" style="left:117px;top:185px;width:3px;height:3px;background:#b6b6b6;"></div>
<div class="a" style="left:118px;top:186px;width:1px;height:1px;background:#2a2c2c;"></div>
<div class="a" style="left:119px;top:187px;width:4px;height:3px;background:#727272;"></div>
<div class="a" style="left:117px;top:193px;width:3px;height:3px;background:#b6b6b6;"></div>
<div class="a" style="left:118px;top:194px;width:1px;height:1px;background:#2a2c2c;"></div>
<div class="a" style="left:119px;top:195px;width:4px;height:3px;background:#727272;"></div>
<div class="a" style="left:117px;top:201px;width:3px;height:3px;background:#b6b6b6;"></div>
<div class="a" style="left:118px;top:202px;width:1px;height:1px;background:#2a2c2c;"></div>
<div class="a" style="left:119px;top:203px;width:4px;height:3px;background:#727272;"></div>
<div class="a" style="left:620.3px;top:132px;width:2px;height:72px;background:#6b6b6b;"></div>
<div class="a" style="left:1093.8px;top:132px;width:2px;height:72px;background:#6b6b6b;"></div>
<div class="a" style="left:1264.2px;top:132px;width:2px;height:72px;background:#6b6b6b;"></div>
<div class="a" style="left:1434px;top:132px;width:2px;height:72px;background:#6b6b6b;"></div>
<div class="t" style="left:174.20px;top:176.61px;font-size:22.2px;line-height:22.2px;color:#ffffff;font-weight:400;transform:translateX(-50%) scaleX(1.0);transform-origin:50% 0;-webkit-text-stroke:0.5px #fff;">New</div>
<div class="t" style="left:250.00px;top:176.61px;font-size:22.2px;line-height:22.2px;color:#ffffff;font-weight:400;transform:translateX(-50%) scaleX(1.02);transform-origin:50% 0;-webkit-text-stroke:0.5px #fff;">Open</div>
<div class="t" style="left:326.80px;top:176.61px;font-size:22.2px;line-height:22.2px;color:#ffffff;font-weight:400;transform:translateX(-50%) scaleX(0.975);transform-origin:50% 0;-webkit-text-stroke:0.5px #fff;">Save</div>
<div class="t" style="left:403.20px;top:176.61px;font-size:22.2px;line-height:22.2px;color:#ffffff;font-weight:400;transform:translateX(-50%) scaleX(1.08);transform-origin:50% 0;-webkit-text-stroke:0.5px #fff;">Import</div>
<div class="t" style="left:485.20px;top:176.61px;font-size:22.2px;line-height:22.2px;color:#ffffff;font-weight:400;transform:translateX(-50%) scaleX(1.065);transform-origin:50% 0;-webkit-text-stroke:0.5px #fff;">Export</div>
<div class="t" style="left:570.00px;top:176.61px;font-size:22.2px;line-height:22.2px;color:#ffffff;font-weight:400;transform:translateX(-50%) scaleX(1.07);transform-origin:50% 0;-webkit-text-stroke:0.5px #fff;">Publish</div>
<div class="t" style="left:670.00px;top:176.61px;font-size:22.2px;line-height:22.2px;color:#878787;font-weight:400;transform:translateX(-50%) scaleX(1.065);transform-origin:50% 0;-webkit-text-stroke:0.5px #878787;">Cut</div>
<div class="t" style="left:746.80px;top:176.61px;font-size:22.2px;line-height:22.2px;color:#878787;font-weight:400;transform:translateX(-50%) scaleX(1.03);transform-origin:50% 0;-webkit-text-stroke:0.5px #878787;">Copy</div>
<div class="t" style="left:823.00px;top:176.61px;font-size:22.2px;line-height:22.2px;color:#ffffff;font-weight:400;transform:translateX(-50%) scaleX(1.02);transform-origin:50% 0;-webkit-text-stroke:0.5px #fff;">Paste</div>
<div class="t" style="left:896.60px;top:176.61px;font-size:22.2px;line-height:22.2px;color:#ffffff;font-weight:400;transform:translateX(-50%) scaleX(1.075);transform-origin:50% 0;-webkit-text-stroke:0.5px #fff;">Insert</div>
<div class="t" style="left:972.60px;top:176.61px;font-size:22.2px;line-height:22.2px;color:#878787;font-weight:400;transform:translateX(-50%) scaleX(1.02);transform-origin:50% 0;-webkit-text-stroke:0.5px #878787;">Clear</div>
<div class="t" style="left:1049.00px;top:176.61px;font-size:22.2px;line-height:22.2px;color:#878787;font-weight:400;transform:translateX(-50%) scaleX(1.055);transform-origin:50% 0;-webkit-text-stroke:0.5px #878787;">Split</div>
<div class="t" style="left:1144.00px;top:176.61px;font-size:22.2px;line-height:22.2px;color:#ffffff;font-weight:400;transform:translateX(-50%) scaleX(1.055);transform-origin:50% 0;-webkit-text-stroke:0.5px #fff;">Undo</div>
<div class="t" style="left:1221.00px;top:176.61px;font-size:22.2px;line-height:22.2px;color:#878787;font-weight:400;transform:translateX(-50%) scaleX(1.015);transform-origin:50% 0;-webkit-text-stroke:0.5px #878787;">Redo</div>
<div class="t" style="left:1315.00px;top:176.61px;font-size:22.2px;line-height:22.2px;color:#ffffff;font-weight:400;transform:translateX(-50%) scaleX(1.03);transform-origin:50% 0;-webkit-text-stroke:0.5px #fff;">Out</div>
<div class="t" style="left:1391.40px;top:176.61px;font-size:22.2px;line-height:22.2px;color:#ffffff;font-weight:400;transform:translateX(-50%) scaleX(1.04);transform-origin:50% 0;-webkit-text-stroke:0.5px #fff;">In</div>
<div class="t" style="left:1484.00px;top:176.61px;font-size:22.2px;line-height:22.2px;color:#ffffff;font-weight:400;transform:translateX(-50%) scaleX(1.025);transform-origin:50% 0;-webkit-text-stroke:0.5px #fff;">Help</div>
<svg class="a" style="left:157px;top:137px;" width="28" height="32" viewBox="0 0 28 32"><path d="M2.2 2.2H19.5L25.8 8.5V29.8H2.2Z" fill="none" stroke="#00a8ff" stroke-width="2.3"/><path d="M19 1.5L26.5 9H19Z" fill="#00a8ff"/></svg>
<svg class="a" style="left:231px;top:139px;" width="34" height="28" viewBox="0 0 34 28"><path d="M2.2 2.2L26.5 4.5V11.5M5.6 11.6H32L26.2 26H2.2V2.2M5.6 11.6L2.2 24" fill="none" stroke="#ffa200" stroke-width="2.2" stroke-linejoin="miter"/></svg>
<svg class="a" style="left:309px;top:137px;" width="30" height="30" viewBox="0 0 30 30"><rect x="2.2" y="2.2" width="25.6" height="25.6" fill="none" stroke="#00a8ff" stroke-width="2.3"/><rect x="6.5" y="2" width="17" height="11" fill="#00a8ff"/><path d="M8.5 18.5H22V28H13.5V22.5H11V28H8.5Z" fill="#00a8ff"/></svg>
<svg class="a" style="left:387px;top:137px;" width="30" height="30" viewBox="0 0 30 30"><rect x="2.2" y="2.2" width="25.6" height="25.6" fill="none" stroke="#00a8ff" stroke-width="2.3"/><rect x="3.60" y="14.05" width="1.4" height="1.90" fill="#ffa200"/><rect x="4.87" y="13.57" width="1.4" height="2.85" fill="#ffa200"/><rect x="6.14" y="11.68" width="1.4" height="6.65" fill="#ffa200"/><rect x="7.41" y="9.30" width="1.4" height="11.40" fill="#ffa200"/><rect x="8.68" y="7.40" width="1.4" height="15.20" fill="#ffa200"/><rect x="9.95" y="10.25" width="1.4" height="9.50" fill="#ffa200"/><rect x="11.22" y="8.35" width="1.4" height="13.30" fill="#ffa200"/><rect x="12.49" y="6.45" width="1.4" height="17.10" fill="#ffa200"/><rect x="13.76" y="10.73" width="1.4" height="8.55" fill="#ffa200"/><rect x="15.03" y="8.82" width="1.4" height="12.35" fill="#ffa200"/><rect x="16.30" y="6.93" width="1.4" height="16.15" fill="#ffa200"/><rect x="17.57" y="9.78" width="1.4" height="10.45" fill="#ffa200"/><rect x="18.84" y="7.88" width="1.4" height="14.25" fill="#ffa200"/><rect x="20.11" y="11.20" width="1.4" height="7.60" fill="#ffa200"/><rect x="21.38" y="9.30" width="1.4" height="11.40" fill="#ffa200"/><rect x="22.65" y="12.62" width="1.4" height="4.75" fill="#ffa200"/><rect x="23.92" y="13.57" width="1.4" height="2.85" fill="#ffa200"/><rect x="25.19" y="14.05" width="1.4" height="1.90" fill="#ffa200"/></svg>
<svg class="a" style="left:467px;top:135px;" width="34" height="32" viewBox="0 0 34 32"><path d="M26.3 14V9L19.5 2.2H2.2V29.8H23" fill="none" stroke="#ffa200" stroke-width="2.3"/><path d="M19 1.5L27 9.5H19Z" fill="#ffa200"/><path d="M11 19H23V13L32.8 22L23 31V25H11Z" fill="#00a8ff"/></svg>
<svg class="a" style="left:551px;top:135px;" width="34" height="34" viewBox="0 0 34 34"><defs><clipPath id="gc"><circle cx="17.1" cy="17" r="15.6"/></clipPath></defs><circle cx="17.1" cy="17" r="15.05" fill="#232525" stroke="#00a8ff" stroke-width="2.35"/><g clip-path="url(#gc)" fill="#00a8ff"><path d="M16 1L15.9 3.6L15.3 6.4L13.4 8.3L11.2 9.5L9.3 11.4L8.7 13.7L11.2 14.9L9.3 15.9L6.8 13.3L6.1 11.8L4.2 14L0 15V0Z"/><path d="M8 18.4L9.3 16.5L11.9 16.5L14.4 18.1L18.8 21L19.2 22.2L17.6 24.8L14.4 27.6L12.5 30.6L10.9 27.9L10 24.8L7.4 20.6Z"/><path d="M20.7 1L20.7 3.5L22.6 5.7L23.6 7.6L23.9 10.8L23.3 13.3L23.6 15.9L24.9 17.5L27.1 18.1L28.7 18.4L29 21L28 24.5L31 26L34 17L30 3Z"/><path d="M11.2 4.8L13.1 4.6L13 5.7L11.4 5.9Z M17.6 3.2L19.8 3.4L19.4 4.6L17.8 4.4Z"/></g><path d="M25.2 8.2L27 8.1L28.7 9.2L28.4 9.9L26.6 9.4L25.3 9.1Z" fill="#232525"/></svg>
<svg class="a" style="left:651px;top:137px;" width="30" height="28" viewBox="0 0 30 28"><circle cx="6" cy="6" r="4.3" fill="none" stroke="#8c8c8c" stroke-width="2.2"/><circle cx="6" cy="22" r="4.3" fill="none" stroke="#8c8c8c" stroke-width="2.2"/><path d="M9.5 8.5L29 22.5M9.5 19.5L29 5.5" stroke="#8c8c8c" stroke-width="2.6" fill="none"/></svg>
<svg class="a" style="left:729px;top:137px;" width="30" height="31" viewBox="0 0 30 31"><path d="M11 11V2.2H2.2V20.8H10.5" fill="none" stroke="#8c8c8c" stroke-width="2.2"/><path d="M11 2.2L16.5 7.7V11" fill="none" stroke="#8c8c8c" stroke-width="2.2"/><path d="M11.7 10.7H22L27.3 16V28.3H11.7Z" fill="#202222" stroke="#8c8c8c" stroke-width="2.2"/></svg>
<svg class="a" style="left:803px;top:135px;" width="34" height="33" viewBox="0 0 34 33"><path d="M2.2 5.7H25.3V26.3H2.2Z" fill="none" stroke="#ffa200" stroke-width="2.3"/><path d="M8.5 5.5V2.2H19V5.5" fill="none" stroke="#ffa200" stroke-width="2.2"/><path d="M7 5H20.5V8.5H15.8L13.7 6.3L11.6 8.5H7Z" fill="#ffa200"/><path d="M15.6 13.2H25.5L31 18.7V30.5H15.6Z" fill="#202222" stroke="#00a8ff" stroke-width="2.2"/></svg>
<svg class="a" style="left:879px;top:135px;" width="36" height="33" viewBox="0 0 36 33"><path d="M2.2 5.7H25.3V26.3H2.2Z" fill="none" stroke="#ffa200" stroke-width="2.3"/><path d="M8.5 5.5V2.2H19V5.5" fill="none" stroke="#ffa200" stroke-width="2.2"/><path d="M7 5H20.5V8.5H15.8L13.7 6.3L11.6 8.5H7Z" fill="#ffa200"/><path d="M5.8 12.2H16L21.5 17.7V30.3H5.8Z" fill="#202222" stroke="#00a8ff" stroke-width="2.2"/><path d="M26.5 28H32.5M29.5 25V31" stroke="#00a8ff" stroke-width="1.8"/></svg>
<svg class="a" style="left:955px;top:137px;" width="34" height="32" viewBox="0 0 34 32"><path d="M13 2.2H2.2V20.5H12M13 2.2L16 5.5" fill="none" stroke="#8c8c8c" stroke-width="2.2"/><path d="M6.5 5.5L30.5 29.5" stroke="#8c8c8c" stroke-width="3" /><path d="M30.5 4L7 29" stroke="#8c8c8c" stroke-width="3.6"/></svg>
<svg class="a" style="left:1031px;top:137px;" width="34" height="28" viewBox="0 0 34 28"><rect x="2.2" y="2.2" width="29.6" height="23.6" fill="none" stroke="#8c8c8c" stroke-width="2.2"/><rect x="15.6" y="5.0" width="3" height="1.7" fill="#8c8c8c"/><rect x="15.6" y="8.4" width="3" height="1.7" fill="#8c8c8c"/><rect x="15.6" y="11.8" width="3" height="1.7" fill="#8c8c8c"/><rect x="15.6" y="15.2" width="3" height="1.7" fill="#8c8c8c"/><rect x="15.6" y="18.6" width="3" height="1.7" fill="#8c8c8c"/><rect x="15.6" y="22.0" width="3" height="1.7" fill="#8c8c8c"/></svg>
<svg class="a" style="left:1127px;top:137px;" width="30" height="31" viewBox="0 0 30 31"><path d="M8.4 26.9L20.3 21.1C26 18.3 27.3 12.3 24.2 8.2C21.6 4.8 17.8 4.3 14.3 6L7 9.6" fill="none" stroke="#00a8ff" stroke-width="4.7" stroke-linecap="butt"/><path d="M3.2 4L1 11.6L9.4 14Z" fill="#00a8ff"/></svg>
<svg class="a" style="left:1201.8px;top:137px;" width="30" height="31" viewBox="0 0 30 31"><g transform="translate(30,0) scale(-1,1)"><path d="M8.4 26.9L20.3 21.1C26 18.3 27.3 12.3 24.2 8.2C21.6 4.8 17.8 4.3 14.3 6L7 9.6" fill="none" stroke="#8c8c8c" stroke-width="4.7" stroke-linecap="butt"/><path d="M3.2 4L1 11.6L9.4 14Z" fill="#8c8c8c"/></g></svg>
<svg class="a" style="left:1295px;top:136px;" width="36" height="32" viewBox="0 0 36 32"><circle cx="10.3" cy="12" r="7.6" fill="none" stroke="#ffa200" stroke-width="3.4"/><path d="M16 17L31 28.5" stroke="#ffa200" stroke-width="3.8" stroke-linecap="round"/><path d="M21 5H30.5" stroke="#c8c8c8" stroke-width="1.8"/></svg>
<svg class="a" style="left:1371px;top:136px;" width="36" height="32" viewBox="0 0 36 32"><circle cx="10.3" cy="12" r="7.6" fill="none" stroke="#ffa200" stroke-width="3.4"/><path d="M16 17L31 28.5" stroke="#ffa200" stroke-width="3.8" stroke-linecap="round"/><path d="M21.5 6.8H30.5M26 2.2V11.4" stroke="#d8d8d8" stroke-width="1.8"/></svg>
<svg class="a" style="left:1467px;top:137px;" width="30" height="30" viewBox="0 0 30 30"><rect x="2.2" y="2.2" width="25.6" height="25.6" rx="3.5" fill="none" stroke="#ffa200" stroke-width="2.2"/></svg>
<div class="t" style="left:1482.20px;top:140.73px;font-size:23px;line-height:23px;color:#c9c9c9;font-weight:700;transform:translateX(-50%);">?</div><div class="a" style="left:112px;top:1804.6px;width:3042px;height:1.8px;background:#0c0c0c;"></div>
<div class="a" style="left:112px;top:1806.3px;width:3042px;height:95px;background:linear-gradient(rgba(48,50,50,.996) 0%,rgba(42,44,44,.996) 25%,rgba(28,30,30,.996) 60%,rgba(21,23,23,.996) 80%,rgba(21,23,23,.996) 100%);"></div>
<div class="a" style="left:117px;top:1815px;width:3px;height:3px;background:#b6b6b6;"></div>
<div class="a" style="left:118px;top:1816px;width:1px;height:1px;background:#202222;"></div>
<div class="a" style="left:119px;top:1817px;width:4px;height:3px;background:#727272;"></div>
<div class="a" style="left:117px;top:1823px;width:3px;height:3px;background:#b6b6b6;"></div>
<div class="a" style="left:118px;top:1824px;width:1px;height:1px;background:#202222;"></div>
<div class="a" style="left:119px;top:1825px;width:4px;height:3px;background:#727272;"></div>
<div class="a" style="left:117px;top:1831px;width:3px;height:3px;background:#b6b6b6;"></div>
<div class="a" style="left:118px;top:1832px;width:1px;height:1px;background:#202222;"></div>
<div class="a" style="left:119px;top:1833px;width:4px;height:3px;background:#727272;"></div>
<div class="a" style="left:117px;top:1839px;width:3px;height:3px;background:#b6b6b6;"></div>
<div class="a" style="left:118px;top:1840px;width:1px;height:1px;background:#202222;"></div>
<div class="a" style="left:119px;top:1841px;width:4px;height:3px;background:#727272;"></div>
<div class="a" style="left:117px;top:1847px;width:3px;height:3px;background:#b6b6b6;"></div>
<div class="a" style="left:118px;top:1848px;width:1px;height:1px;background:#202222;"></div>
<div class="a" style="left:119px;top:1849px;width:4px;height:3px;background:#727272;"></div>
<div class="a" style="left:117px;top:1855px;width:3px;height:3px;background:#b6b6b6;"></div>
<div class="a" style="left:118px;top:1856px;width:1px;height:1px;background:#202222;"></div>
<div class="a" style="left:119px;top:1857px;width:4px;height:3px;background:#727272;"></div>
<div class="a" style="left:117px;top:1863px;width:3px;height:3px;background:#b6b6b6;"></div>
<div class="a" style="left:118px;top:1864px;width:1px;height:1px;background:#202222;"></div>
<div class="a" style="left:119px;top:1865px;width:4px;height:3px;background:#727272;"></div>
<div class="a" style="left:117px;top:1871px;width:3px;height:3px;background:#b6b6b6;"></div>
<div class="a" style="left:118px;top:1872px;width:1px;height:1px;background:#202222;"></div>
<div class="a" style="left:119px;top:1873px;width:4px;height:3px;background:#727272;"></div>
<div class="a" style="left:117px;top:1879px;width:3px;height:3px;background:#b6b6b6;"></div>
<div class="a" style="left:118px;top:1880px;width:1px;height:1px;background:#202222;"></div>
<div class="a" style="left:119px;top:1881px;width:4px;height:3px;background:#727272;"></div>
<div class="a" style="left:117px;top:1887px;width:3px;height:3px;background:#b6b6b6;"></div>
<div class="a" style="left:118px;top:1888px;width:1px;height:1px;background:#202222;"></div>
<div class="a" style="left:119px;top:1889px;width:4px;height:3px;background:#727272;"></div>
<svg class="a" style="left:0;top:1800px" width="700" height="110" viewBox="0 1800 700 110"><rect x="165.6" y="1845.7" width="4.4" height="16.6" fill="#fdfdfd"/><path d="M184 1845.7V1862.3L170.4 1854Z" fill="#fdfdfd"/><path d="M196.4 1845.7V1862.3L182.6 1854Z" fill="#fdfdfd"/><path d="M256 1845.7V1862.3L242 1854Z" fill="#fdfdfd"/><path d="M268.6 1845.7V1862.3L254.6 1854Z" fill="#fdfdfd"/><rect x="321" y="1846.2" width="18" height="16.2" fill="#fdfdfd"/><path d="M402 1838V1870L431.8 1854Z" fill="#fdfdfd"/><circle cx="503.7" cy="1853.8" r="12.2" fill="#ff0014"/><path d="M563.2 1845.7V1862.3L577 1854Z" fill="#fdfdfd"/><path d="M575.6 1845.7V1862.3L589.4 1854Z" fill="#fdfdfd"/><path d="M635.3 1845.7V1862.3L649 1854Z" fill="#fdfdfd"/><path d="M647.6 1845.7V1862.3L661.4 1854Z" fill="#fdfdfd"/><rect x="662" y="1845.7" width="4.4" height="16.6" fill="#fdfdfd"/></svg>
<div class="a" style="left:702.4px;top:1832.4px;width:143px;height:41.8px;background:#0b0b0b;border-radius:3px;box-shadow:0 1.6px 0 rgba(255,255,255,.13);"></div>
<div class="a" style="left:703.8px;top:1833.8px;width:42.2px;height:38.6px;background:linear-gradient(#404040 0%,#353535 50%,#282828 100%);border-radius:2px 0 0 2px;"></div>
<div class="a" style="left:747.7px;top:1833.8px;width:72.6px;height:38.6px;background:#1f1f1f;"></div>
<div class="a" style="left:822px;top:1833.8px;width:22px;height:18.2px;background:linear-gradient(#484848,#3a3a3a);border-radius:0 2px 0 0;"></div>
<div class="a" style="left:822px;top:1853.6px;width:22px;height:18.8px;background:linear-gradient(#3c3c3c,#2e2e2e);border-radius:0 0 2px 0;"></div>
<div class="a" style="left:717.8px;top:1845.7px;width:14.2px;height:14.2px;background:radial-gradient(circle at 50% 50%,#fff 0%,#fcfcfc 60%,#d8d8d8 100%);border-radius:50%;"></div>
<div class="t" style="left:783.40px;top:1840.88px;font-size:24px;line-height:24px;color:#c6c6c6;font-weight:400;transform:translateX(-50%);">1.5x</div>
<svg class="a" style="left:827.5px;top:1838px;" width="11" height="30" viewBox="0 0 11 30"><path d="M0.3 8.2H10.7L5.5 1.9Z" fill="#d0d0d0"/><path d="M0.3 21.9H10.7L5.5 28.2Z" fill="#c4c4c4"/></svg>
<div class="a" style="left:880px;top:1815.4px;width:594.4px;height:74px;background:#1a1a1a;border-radius:9px;box-shadow:inset 0 1.5px 2px #0a0a0a,0 1.5px 0 rgba(255,255,255,.12),0 0 0 1px rgba(0,0,0,.25);"></div>
<div class="a" style="left:1314.3px;top:1819.6px;width:158px;height:33px;background:#4d0e11;border-radius:0 7px 0 0;"></div>
<div class="a" style="left:1448.5px;top:1852px;width:23.8px;height:34.4px;background:#4d0e11;border-radius:0 0 7px 0;"></div>
<div class="t" style="left:903.90px;top:1818.51px;font-size:18.3px;line-height:18.3px;color:#d2d2d2;font-weight:400;transform:translateX(-50%);letter-spacing:-0.2px;-webkit-text-stroke:0.25px #d2d2d2;">-50</div>
<div class="t" style="left:949.90px;top:1818.51px;font-size:18.3px;line-height:18.3px;color:#d2d2d2;font-weight:400;transform:translateX(-50%);letter-spacing:-0.2px;-webkit-text-stroke:0.25px #d2d2d2;">-40</div>
<div class="t" style="left:998.20px;top:1818.51px;font-size:18.3px;line-height:18.3px;color:#d2d2d2;font-weight:400;transform:translateX(-50%);letter-spacing:-0.2px;-webkit-text-stroke:0.25px #d2d2d2;">-30</div>
<div class="t" style="left:1072.00px;top:1818.51px;font-size:18.3px;line-height:18.3px;color:#d2d2d2;font-weight:400;transform:translateX(-50%);letter-spacing:-0.2px;-webkit-text-stroke:0.25px #d2d2d2;">-25</div>
<div class="t" style="left:1148.00px;top:1818.51px;font-size:18.3px;line-height:18.3px;color:#d2d2d2;font-weight:400;transform:translateX(-50%);letter-spacing:-0.2px;-webkit-text-stroke:0.25px #d2d2d2;">-20</div>
<div class="t" style="left:1222.00px;top:1818.51px;font-size:18.3px;line-height:18.3px;color:#d2d2d2;font-weight:400;transform:translateX(-50%);letter-spacing:-0.2px;-webkit-text-stroke:0.25px #d2d2d2;">-15</div>
<div class="t" style="left:1266.50px;top:1818.51px;font-size:18.3px;line-height:18.3px;color:#d2d2d2;font-weight:400;transform:translateX(-50%);letter-spacing:-0.2px;-webkit-text-stroke:0.25px #d2d2d2;">-12</div>
<div class="t" style="left:1311.50px;top:1818.51px;font-size:18.3px;line-height:18.3px;color:#d2d2d2;font-weight:400;transform:translateX(-50%);letter-spacing:-0.2px;-webkit-text-stroke:0.25px #d2d2d2;">-9</div>
<div class="t" style="left:1356.00px;top:1818.51px;font-size:18.3px;line-height:18.3px;color:#d2d2d2;font-weight:400;transform:translateX(-50%);letter-spacing:-0.2px;-webkit-text-stroke:0.25px #d2d2d2;">-6</div>
<div class="t" style="left:1402.00px;top:1818.51px;font-size:18.3px;line-height:18.3px;color:#d2d2d2;font-weight:400;transform:translateX(-50%);letter-spacing:-0.2px;-webkit-text-stroke:0.25px #d2d2d2;">-3</div>
<div class="a" style="left:903.6px;top:1844.6px;width:2px;height:7.2px;background:#dadada;"></div>
<div class="a" style="left:950.1px;top:1844.6px;width:2px;height:7.2px;background:#dadada;"></div>
<div class="a" style="left:997.7px;top:1844.6px;width:2px;height:7.2px;background:#dadada;"></div>
<div class="a" style="left:1071.8px;top:1844.6px;width:2px;height:7.2px;background:#dadada;"></div>
<div class="a" style="left:1148px;top:1844.6px;width:2px;height:7.2px;background:#dadada;"></div>
<div class="a" style="left:1221.6px;top:1844.6px;width:2px;height:7.2px;background:#dadada;"></div>
<div class="a" style="left:1266px;top:1844.6px;width:2px;height:7.2px;background:#dadada;"></div>
<div class="a" style="left:1312.5px;top:1844.6px;width:2px;height:7.2px;background:#dadada;"></div>
<div class="a" style="left:1355.8px;top:1844.6px;width:2px;height:7.2px;background:#dadada;"></div>
<div class="a" style="left:1401.8px;top:1844.6px;width:2px;height:7.2px;background:#dadada;"></div>
<div class="a" style="left:887.9px;top:1852.4px;width:559.8px;height:16px;background:repeating-linear-gradient(90deg,#3e3e3e 0,#3e3e3e 4.4px,#252525 4.4px,#252525 6px);"></div>
<div class="a" style="left:887.9px;top:1852.4px;width:335.6px;height:16px;background:repeating-linear-gradient(90deg,#38a0f0 0,#38a0f0 4.7px,#1d4f7c 4.7px,#1d4f7c 6px);"></div>
<div class="a" style="left:1228px;top:1852.4px;width:6.4px;height:16px;background:#f0b400;"></div>
<div class="a" style="left:1226.6px;top:1852.4px;width:1.6px;height:16px;background:#7a6a20;"></div>
<div class="a" style="left:887.9px;top:1869.8px;width:559.8px;height:14.6px;background:repeating-linear-gradient(90deg,#3e3e3e 0,#3e3e3e 4.4px,#252525 4.4px,#252525 6px);"></div>
<div class="a" style="left:887.9px;top:1869.8px;width:335.6px;height:14.6px;background:repeating-linear-gradient(90deg,#38a0f0 0,#38a0f0 4.7px,#1d4f7c 4.7px,#1d4f7c 6px);"></div>
<div class="a" style="left:1228px;top:1869.8px;width:6.4px;height:14.6px;background:#f0b400;"></div>
<div class="a" style="left:1226.6px;top:1869.8px;width:1.6px;height:14.6px;background:#7a6a20;"></div>
<div class="a" style="left:1452.5px;top:1852px;width:13px;height:13px;background:#3b3b3b;border-radius:50%;"></div>
<div class="a" style="left:1452.5px;top:1869.8px;width:13px;height:13px;background:#3b3b3b;border-radius:50%;"></div>
<div class="a" style="left:1500px;top:1815.4px;width:596.6px;height:74px;background:#1a1a1a;border-radius:9px;box-shadow:inset 0 1.5px 2px #0a0a0a,0 1.5px 0 rgba(255,255,255,.12),0 0 0 1px rgba(0,0,0,.25);"></div>
<div class="t" style="left:1522.00px;top:1819.79px;font-size:69px;line-height:69px;color:#383838;font-weight:400;transform:scaleX(0.985);transform-origin:0 0;">00:</div>
<div class="t" style="left:1615.60px;top:1819.79px;font-size:69px;line-height:69px;color:#ffffff;font-weight:400;transform:scaleX(0.98);transform-origin:0 0;">00:00</div>
<div class="t" style="left:1785.30px;top:1844.34px;font-size:40px;line-height:40px;color:#7a7a7a;font-weight:400;">.000</div>
<div class="t" style="left:1875.30px;top:1815.72px;font-size:21px;line-height:21px;color:#00c6ff;font-weight:400;transform:scaleX(1.06);transform-origin:0 0;-webkit-text-stroke:0.45px #00c6ff;">In:</div>
<div class="t" style="left:1875.30px;top:1837.92px;font-size:21px;line-height:21px;color:#00c6ff;font-weight:400;transform:scaleX(1.06);transform-origin:0 0;-webkit-text-stroke:0.45px #00c6ff;">Out:</div>
<div class="t" style="left:1876.40px;top:1860.42px;font-size:21px;line-height:21px;color:#00c6ff;font-weight:400;transform:scaleX(1.06);transform-origin:0 0;-webkit-text-stroke:0.45px #00c6ff;">Time:</div>
<div class="t" style="left:1954.00px;top:1821.32px;font-size:21px;line-height:21px;color:#333;font-weight:400;transform:scaleX(1.04);transform-origin:0 0;">0:0</div>
<div class="t" style="left:1983.40px;top:1821.32px;font-size:21px;line-height:21px;color:#fff;font-weight:400;transform:scaleX(1.045);transform-origin:0 0;">0:00</div>
<div class="t" style="left:2026.40px;top:1821.32px;font-size:21px;line-height:21px;color:#8c8c8c;font-weight:400;transform:scaleX(1.045);transform-origin:0 0;">.000</div>
<div class="t" style="left:1954.00px;top:1842.72px;font-size:21px;line-height:21px;color:#333;font-weight:400;transform:scaleX(1.04);transform-origin:0 0;">0:0</div>
<div class="t" style="left:1983.40px;top:1842.72px;font-size:21px;line-height:21px;color:#fff;font-weight:400;transform:scaleX(1.045);transform-origin:0 0;">0:00</div>
<div class="t" style="left:2026.40px;top:1842.72px;font-size:21px;line-height:21px;color:#8c8c8c;font-weight:400;transform:scaleX(1.045);transform-origin:0 0;">.000</div>
<div class="t" style="left:1954.00px;top:1864.72px;font-size:21px;line-height:21px;color:#333;font-weight:400;transform:scaleX(1.04);transform-origin:0 0;">0:0</div>
<div class="t" style="left:1983.40px;top:1864.72px;font-size:21px;line-height:21px;color:#fff;font-weight:400;transform:scaleX(1.045);transform-origin:0 0;">0:00</div>
<div class="t" style="left:2026.40px;top:1864.72px;font-size:21px;line-height:21px;color:#8c8c8c;font-weight:400;transform:scaleX(1.045);transform-origin:0 0;">.000</div>
</div></div>
</body></html>
